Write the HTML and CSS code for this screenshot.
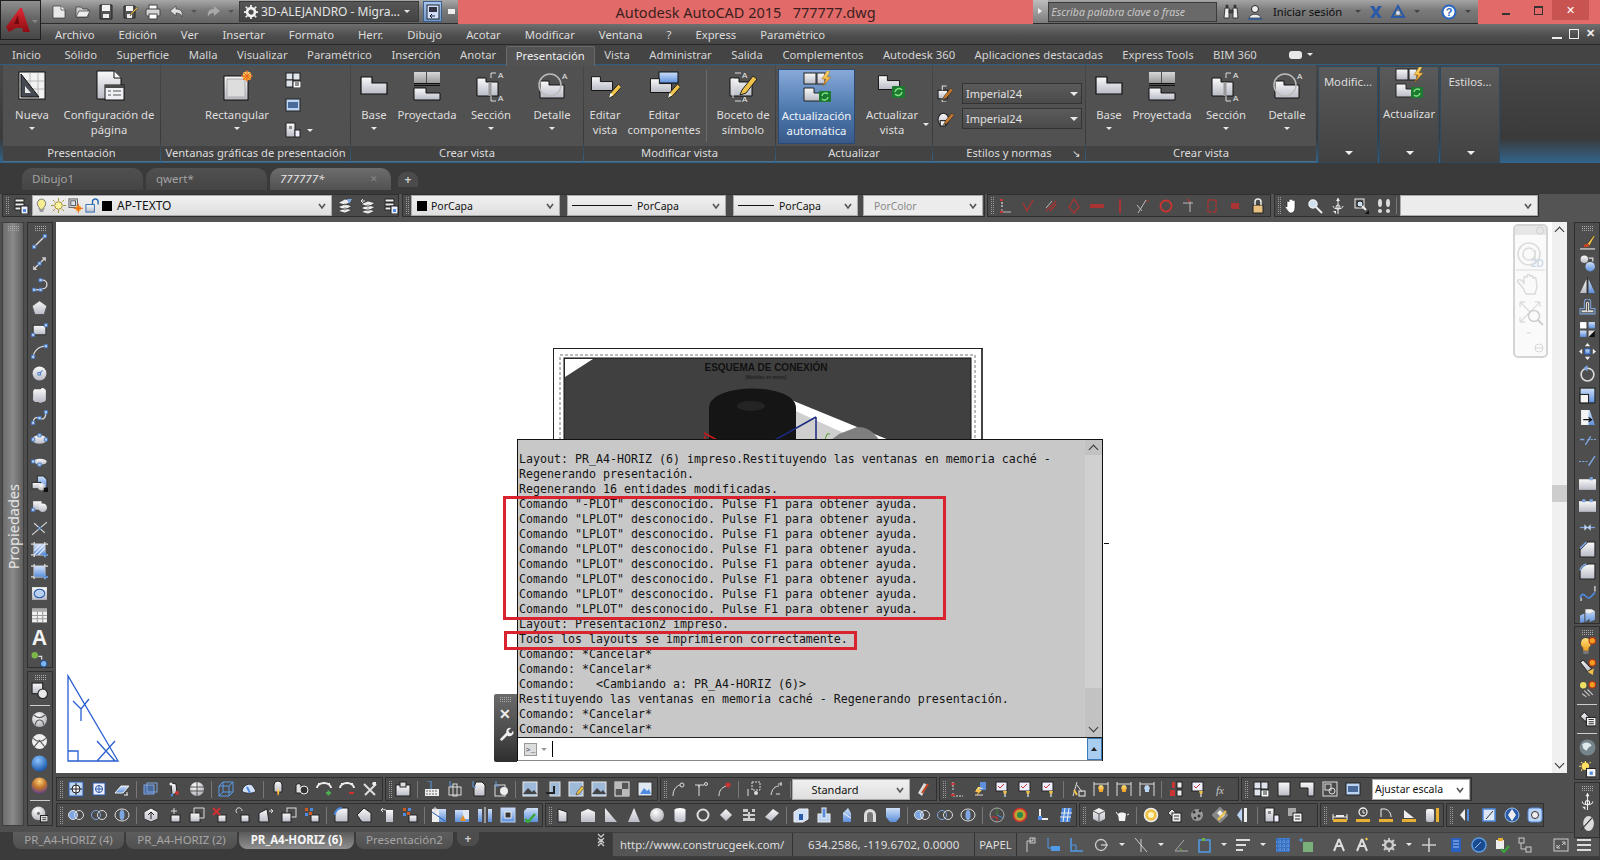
FILE: index.html
```html
<!DOCTYPE html>
<html lang="es">
<head>
<meta charset="utf-8">
<title>Autodesk AutoCAD 2015</title>
<link rel="stylesheet" href="styles.css">
</head>
<body>
<svg class="defs" xmlns="http://www.w3.org/2000/svg">
<defs>
<linearGradient id="w" x1="0" y1="0" x2="0" y2="1"><stop offset="0" stop-color="#fafafa"/><stop offset="1" stop-color="#b9bbc6"/></linearGradient>
<linearGradient id="g" x1="0" y1="0" x2="0" y2="1"><stop offset="0" stop-color="#d8d8d8"/><stop offset="1" stop-color="#9a9a9a"/></linearGradient>
<linearGradient id="b" x1="0" y1="0" x2="0" y2="1"><stop offset="0" stop-color="#cfe0f8"/><stop offset="1" stop-color="#5c8fdc"/></linearGradient>
<linearGradient id="o" x1="0" y1="0" x2="0" y2="1"><stop offset="0" stop-color="#ffe27a"/><stop offset="1" stop-color="#ef9a1c"/></linearGradient>
<linearGradient id="r" x1="0" y1="0" x2="0" y2="1"><stop offset="0" stop-color="#e02a36"/><stop offset="1" stop-color="#8d0d12"/></linearGradient>
<radialGradient id="sb" cx=".4" cy=".3" r=".8"><stop offset="0" stop-color="#8ec4ff"/><stop offset="1" stop-color="#0c4aa0"/></radialGradient>
<radialGradient id="so" cx=".5" cy=".25" r=".8"><stop offset="0" stop-color="#ffd27a"/><stop offset=".5" stop-color="#c0742a"/><stop offset="1" stop-color="#5a3aa0"/></radialGradient>
<radialGradient id="sw" cx=".4" cy=".3" r=".8"><stop offset="0" stop-color="#fff"/><stop offset="1" stop-color="#a8a8b0"/></radialGradient>
</defs>

<!-- ribbon icons -->
<symbol id="Lb" viewBox="0 0 32 32"><path d="M3 7h11v6h15v11H3z" fill="url(#w)" stroke="#111" stroke-width="1.2"/></symbol>
<symbol id="Pn" viewBox="0 0 32 32"><path d="M20 28l1.500-5 8-9 3 3-8 9z" fill="#eec24a" stroke="#222"/><path d="M20 28l1.500-5 2.500 2z" fill="#fff"/></symbol>
<symbol id="Rn" viewBox="0 0 32 32"><rect x="16" y="16" width="13" height="12" rx="1" fill="#1c7a30"/><path d="M19 22a4 4 0 0 1 7-2M26 22a4 4 0 0 1-7 2" fill="none" stroke="#7fe07f" stroke-width="1.600"/></symbol>
<symbol id="Nu" viewBox="0 0 32 32"><rect x="3" y="2" width="26" height="27" fill="#f2f2f2" stroke="#111"/><path d="M14 3v25M22 3v25M4 11h24M4 19h24" stroke="#b8b8b8"/><path d="M5 4v23h18z" fill="#454a52" stroke="#111"/><path d="M9 16v7h6z" fill="#e8e8e8"/></symbol>
<symbol id="Pa" viewBox="0 0 32 32"><path d="M4 1h17l7 7v21H4z" fill="url(#w)" stroke="#111"/><path d="M21 1v7h7" fill="#fff" stroke="#111"/><rect x="12" y="15" width="19" height="15" fill="#eef0f4" stroke="#111"/><rect x="12" y="15" width="19" height="3" fill="#4a4a4a"/><path d="M15 21h3M15 25h3M20 21h8M20 25h8" stroke="#555"/></symbol>
<symbol id="Rc" viewBox="0 0 32 32"><rect x="3" y="6" width="24" height="24" fill="url(#w)" stroke="#111"/><rect x="6" y="9" width="18" height="18" fill="#ddd" stroke="#aaa"/><circle cx="26" cy="6" r="4.500" fill="url(#o)"/><path d="M26 0v12M20 6h12M22 2l8 8M30 2l-8 8" stroke="#e8601c"/></symbol>
<symbol id="Pr" viewBox="0 0 32 32"><rect x="3" y="2" width="12" height="11" fill="url(#g)"/><rect x="16" y="2" width="13" height="11" fill="url(#g)"/><path d="M3 13.500h26M3 15.500h26" stroke="#111"/><path d="M3 18h12v5h14v7H3z" fill="url(#w)" stroke="#111"/></symbol>
<symbol id="Se" viewBox="0 0 32 32"><path d="M2 8h9v4h12v14H2z" fill="url(#w)" stroke="#111"/><path d="M15 12v14" stroke="#999" stroke-width="3"/><path d="M16 8V3h5M16 26v5h5" fill="none" stroke="#ddd"/><text class="ta" x="23" y="8">A</text><text class="ta" x="23" y="31">A</text></symbol>
<symbol id="De" viewBox="0 0 32 32"><path d="M4 11h9v4h15v13H4z" fill="url(#w)" stroke="#111"/><circle cx="14" cy="15" r="11" fill="none" stroke="#bbb" stroke-width="1.500"/><text class="ta" x="26" y="9">A</text></symbol>
<symbol id="Ev" viewBox="0 0 32 32"><use href="#Lb" width="26" height="26" x="0" y="1"/><use href="#Pn"/></symbol>
<symbol id="Ec" viewBox="0 0 32 32"><rect x="11" y="2" width="19" height="11" fill="url(#b)" stroke="#111"/><use href="#Lb" width="26" height="26" x="0" y="3"/><use href="#Pn" y="0"/></symbol>
<symbol id="Bo" viewBox="0 0 32 32"><path d="M3 8h9v4h13v14H3z" fill="url(#w)" stroke="#111"/><path d="M6 8v20M8 3h6M8 31h6" fill="none" stroke="#ddd"/><text class="ta" x="15" y="8">A</text><text class="ta" x="15" y="32">A</text><path d="M13 25l2-5 11-14 4 3-11 14z" fill="#eec24a" stroke="#222"/></symbol>
<symbol id="Au" viewBox="0 0 32 32"><rect x="3" y="2" width="12" height="11" fill="url(#w)" stroke="#222"/><rect x="16" y="2" width="8" height="11" fill="url(#w)" stroke="#222"/><path d="M26 0l-5 8h4l-3 7 8-9h-4l3-6z" fill="url(#o)" stroke="#a46a10" stroke-width=".5"/><path d="M3 17h10v5h11v8H3z" fill="url(#w)" stroke="#222"/><rect x="18" y="20" width="12" height="11" rx="1" fill="#1c7a30"/><path d="M21 25a3.500 3.500 0 0 1 6-2M27 26a3.500 3.500 0 0 1-6 2" fill="none" stroke="#7fe07f" stroke-width="1.500"/></symbol>
<symbol id="Ua" viewBox="0 0 32 32"><use href="#Lb" width="26" height="26" x="0" y="0"/><use href="#Rn"/></symbol>
<symbol id="Sa" viewBox="0 0 16 16"><rect x="1" y="5" width="9" height="8" fill="url(#w)" stroke="#222"/><path d="M5 5V1h4M5 13v3h4" stroke="#ddd" fill="none"/><path d="M5 14l2-4 6-7 2 2-6 7z" fill="#c8782a" stroke="#222" stroke-width=".5"/></symbol>
<symbol id="Sb" viewBox="0 0 16 16"><ellipse cx="6" cy="9" rx="5" ry="6" fill="url(#w)" stroke="#222"/><rect x="3" y="10" width="5" height="5" fill="#eee" stroke="#222"/><path d="M6 14l2-4 6-7 2 2-6 7z" fill="#c8782a" stroke="#222" stroke-width=".5"/></symbol>

<!-- small generic -->
<symbol id="ln" viewBox="0 0 16 16"><path class="k" d="M3 13L13 3"/><path class="n" d="M1.500 11.500h3v3h-3zM11.500 1.500h3v3h-3z"/></symbol>
<symbol id="ry" viewBox="0 0 16 16"><path class="k" d="M3 13L13 3"/><path d="M10 2h4v4zM2 10v4h4z" fill="#ccc"/><path class="n" d="M6.500 6.500h3v3h-3z"/></symbol>
<symbol id="pl" viewBox="0 0 16 16"><path class="k" d="M3 12h6M9 3h2a4 4 0 0 1 0 8h-1"/><path class="n" d="M1.500 10.500h3v3h-3zM7.500 1.500h3v3h-3zM7.500 10.500h3v3h-3z"/></symbol>
<symbol id="pg" viewBox="0 0 16 16"><path d="M8 1.500l7 5-2.500 8h-9L1 6.500z" fill="url(#w)" stroke="#555"/></symbol>
<symbol id="rc" viewBox="0 0 16 16"><rect x="2" y="4" width="12" height="9" fill="url(#w)" stroke="#333"/><path class="n" d="M.5 11.500h3v3h-3zM12.500 2.500h3v3h-3z"/></symbol>
<symbol id="ar" viewBox="0 0 16 16"><path class="k" d="M2 14C2 8 7 3 14 3"/><path class="n" d="M.5 11.500h3v3h-3zM12.500 1.500h3v3h-3z"/></symbol>
<symbol id="ci" viewBox="0 0 16 16"><circle cx="8" cy="8" r="6.500" fill="url(#w)"/><path class="kb" d="M8 8l3-3"/><path class="n" d="M6.500 7h2.500v2.500h-2.500z"/></symbol>
<symbol id="cl" viewBox="0 0 16 16"><path d="M3 2h6a3 3 0 0 1 5 3v6a3 3 0 0 1-3 3 3 3 0 0 1-4 0H4a3 3 0 0 1-2-4V4z" fill="url(#w)"/></symbol>
<symbol id="sp" viewBox="0 0 16 16"><path class="k" d="M2 14c0-8 5-6 7-5s5 0 5-6"/><path class="n" d="M.5 11.500h3v3h-3zM6.500 7h3v3h-3zM12.500 1.500h3v3h-3z"/></symbol>
<symbol id="el" viewBox="0 0 16 16"><ellipse cx="8" cy="8" rx="7" ry="4" fill="url(#w)"/><path class="n" d="M.5 6.500h3v3h-3zM6.500 2.500h3v3h-3zM12.500 6.500h3v3h-3z"/></symbol>
<symbol id="ea" viewBox="0 0 16 16"><path d="M2 8a7 4 0 0 1 13 0 7 4 0 0 1-9 3z" fill="url(#w)"/><path class="n" d="M.5 6.500h3v3h-3zM6.500 9.500h3v3h-3z"/></symbol>
<symbol id="ib" viewBox="0 0 16 16"><path d="M6 1h6l3 3v8H6z" fill="url(#b)" stroke="#333"/><rect x="1" y="7" width="8" height="6" fill="url(#w)" stroke="#333"/><circle cx="10" cy="11" r="3.500" fill="url(#sw)"/><path d="M12 12h4v4h-4z" fill="#111"/></symbol>
<symbol id="mb" viewBox="0 0 16 16"><rect x="2" y="4" width="8" height="8" fill="url(#w)"/><circle cx="11" cy="10" r="4" fill="url(#w)"/><path class="n" d="M.5 10.500h3v3h-3z"/></symbol>
<symbol id="pt" viewBox="0 0 16 16"><path d="M1 15L15 3M3 4l10 9" stroke="#ddd" fill="none"/><path class="n" d="M7 7.500h2v2h-2z"/></symbol>
<symbol id="ha" viewBox="0 0 16 16"><path class="k" d="M3 1v14M13 1v14M0 3h16M0 13h16"/><rect x="3" y="3" width="10" height="10" fill="url(#b)"/><path d="M3 9l6-6M3 13L13 3M7 13l6-6" stroke="#eef" fill="none"/><path d="M11 13h5M13.500 10.500v5" stroke="#5c8fdc" stroke-width="1.300"/></symbol>
<symbol id="gr" viewBox="0 0 16 16"><path class="k" d="M3 1v14M13 1v14M0 3h16M0 13h16"/><rect x="3" y="3" width="10" height="10" fill="url(#b)"/><path d="M11 13h5M13.500 10.500v5" stroke="#5c8fdc" stroke-width="1.300"/></symbol>
<symbol id="rg" viewBox="0 0 16 16"><rect x="1" y="2" width="14" height="12" fill="url(#w)"/><ellipse cx="8" cy="8" rx="5" ry="4" fill="#b9d0f0" stroke="#2a5ba8"/></symbol>
<symbol id="tb" viewBox="0 0 16 16"><rect x="1" y="1.500" width="14" height="13" fill="#f2f2f2"/><rect x="1" y="1.500" width="14" height="3" fill="#aaa"/><path d="M1 8h14M1 11h14M6 4v11M11 4v11" stroke="#999"/></symbol>
<symbol id="tx" viewBox="0 0 16 16"><text class="tA" x="8" y="15">A</text></symbol>
<symbol id="ad" viewBox="0 0 16 16"><circle cx="3.500" cy="4" r="3" fill="#7ab648"/><circle cx="12" cy="12" r="3" fill="#7eb4f0" stroke="#23508f"/><path class="k" d="M7 5h3v3"/></symbol>
<symbol id="oc" viewBox="0 0 16 16"><rect x="1" y="1" width="10" height="10" fill="url(#w)" stroke="#222"/><circle cx="11" cy="11" r="4.500" fill="#e8e8e8" stroke="#222"/></symbol>
<symbol id="s1" viewBox="0 0 16 16"><circle cx="8" cy="8" r="7" fill="url(#sw)"/><path d="M3 4c4 3 6 3 10 0M4 13c1-6 7-6 8 0" fill="none" stroke="#555"/></symbol>
<symbol id="s2" viewBox="0 0 16 16"><circle cx="8" cy="8" r="7" fill="#eee"/><path d="M2 5c4 4 8 4 12 0M3 13l5-6 5 6" fill="none" stroke="#555"/></symbol>
<symbol id="s3" viewBox="0 0 16 16"><circle cx="8" cy="8" r="7.500" fill="url(#sb)"/></symbol>
<symbol id="s4" viewBox="0 0 16 16"><circle cx="8" cy="8" r="7.500" fill="url(#so)"/></symbol>
<symbol id="sl" viewBox="0 0 16 16"><circle cx="7" cy="7" r="6.500" fill="url(#sw)"/><circle cx="7" cy="7" r="1.500" fill="#777"/><rect x="9" y="9" width="7" height="6" fill="#f4f4f4" stroke="#222"/><path d="M10.500 11h4M10.500 13h4" stroke="#333"/></symbol>

<!-- right column -->
<symbol id="mp" viewBox="0 0 16 16"><path d="M8 10L14 2l1 1-5 9z" fill="#eec24a" stroke="#222" stroke-width=".5"/><path d="M4 13c1-3 3-3 4-3l2 2c-1 1-3 2-6 1z" fill="#c8461e"/><path d="M1 15h14" stroke="#eee"/></symbol>
<symbol id="cp" viewBox="0 0 16 16"><circle cx="5" cy="4" r="3.500" fill="url(#w)"/><circle cx="10.500" cy="11" r="4.500" fill="url(#b)"/><path class="k" d="M9 3h4v3"/></symbol>
<symbol id="mi" viewBox="0 0 16 16"><path d="M7 2v13H1z" fill="url(#w)"/><path d="M9 2v13h6z" fill="url(#b)"/><path d="M8 0v16" stroke="#333"/></symbol>
<symbol id="of" viewBox="0 0 16 16"><path d="M1 14V9h4V3a2 2 0 0 1 6 0v6h4v5z" fill="none" stroke="#7ea6e0"/><path d="M3 12V11h4V4a1 1 0 0 1 2 0v7h4v1z" fill="none" stroke="#ddd"/></symbol>
<symbol id="ay" viewBox="0 0 16 16"><rect x="1" y="1" width="6" height="6" fill="#fff"/><rect x="9" y="1" width="6" height="6" fill="url(#b)"/><rect x="1" y="9" width="6" height="6" fill="url(#b)"/><path d="M9 9h6v6H9z" fill="#ddd"/><path d="M15 9v6H9z" fill="#111"/></symbol>
<symbol id="mv" viewBox="0 0 16 16"><path d="M8 0l2.500 3h-5zM8 16l-2.500-3h5zM0 8l3-2.500v5zM16 8l-3 2.500v-5z" fill="#eee"/><rect x="5.500" y="5.500" width="5" height="5" fill="url(#b)" stroke="#2a5ba8"/></symbol>
<symbol id="ro" viewBox="0 0 16 16"><circle cx="8" cy="9" r="6" fill="none" stroke="#ddd" stroke-width="1.500"/><path d="M8 0v6l-4-3z" fill="#7ea6e0"/></symbol>
<symbol id="sc" viewBox="0 0 16 16"><rect x="1" y="1" width="14" height="14" fill="url(#b)" stroke="#222"/><rect x="1" y="7" width="8" height="8" fill="#f4f4f4" stroke="#222"/></symbol>
<symbol id="st" viewBox="0 0 16 16"><path d="M2 1h8l5 14H2z" fill="url(#b)"/><path d="M2 1h7v14H2z" fill="#f4f4f4"/><path d="M4 10h8M9 8l3 2-3 2" fill="none" stroke="#111"/></symbol>
<symbol id="tr" viewBox="0 0 16 16"><path d="M1 8h4M11 5l-5 8" stroke="#7ea6e0" stroke-width="1.300" fill="none"/><path d="M8 8h8" stroke="#7ea6e0" stroke-dasharray="2 1"/></symbol>
<symbol id="xt" viewBox="0 0 16 16"><path d="M0 8h8" stroke="#7ea6e0" stroke-dasharray="2 1"/><path d="M9 12L15 3" stroke="#7ea6e0" stroke-width="1.300"/></symbol>
<symbol id="b1" viewBox="0 0 16 16"><rect x="0" y="4" width="16" height="10" fill="url(#w)"/><rect x="10" y="2" width="3" height="3" fill="#7ea6e0"/></symbol>
<symbol id="b2" viewBox="0 0 16 16"><rect x="0" y="4" width="16" height="10" fill="url(#w)"/><path d="M3 2h3v3H3zM10 2h3v3h-3z" fill="#7ea6e0"/></symbol>
<symbol id="jn" viewBox="0 0 16 16"><path d="M1 8h14" stroke="#7ea6e0" stroke-width="1.200"/><path d="M5 5l3 3-3 3zM11 5L8 8l3 3z" fill="#bcd4f4"/></symbol>
<symbol id="ch" viewBox="0 0 16 16"><path d="M1 15V8l7-7h7v14z" fill="url(#w)" stroke="#222"/><path d="M1 7l6-6" stroke="#7ea6e0" stroke-width="1.500"/></symbol>
<symbol id="fi" viewBox="0 0 16 16"><path d="M1 15V9c0-4 4-8 8-8h6v14z" fill="url(#w)" stroke="#222"/><path d="M1 7c1-3 3-5 6-6" stroke="#7ea6e0" stroke-width="1.500" fill="none"/></symbol>
<symbol id="bd" viewBox="0 0 16 16"><path d="M1 12c3-8 6 2 9 0s4-4 5-5" fill="none" stroke="#4f8be0" stroke-width="1.500"/><path class="k" d="M2 15v-3M15 6V1"/></symbol>
<symbol id="ex" viewBox="0 0 16 16"><path d="M1 8l4-2v8l-4 1zM6 5l4-3v9l-4 3zM10 6l5-2v8l-5 2z" fill="url(#b)"/><path d="M6 2h6l3 2-5 2-4-1z" fill="#eee"/></symbol>
<symbol id="lg" viewBox="0 0 16 16"><path d="M6 1a5 5 0 0 1 3 9v3H4v-3A5 5 0 0 1 6 1z" fill="url(#o)"/><rect x="4" y="13" width="5" height="3" fill="#777"/><circle cx="12.500" cy="3.500" r="3" fill="#f0a020" stroke="#c03010"/></symbol>
<symbol id="lf" viewBox="0 0 16 16"><path d="M1 3l3-2 8 8-4 3z" fill="url(#w)" stroke="#333"/><path d="M8 12l5 3 1-6z" fill="#eec24a"/><circle cx="12.500" cy="3.500" r="3" fill="#f0a020" stroke="#c03010"/></symbol>
<symbol id="ld" viewBox="0 0 16 16"><circle cx="4" cy="4" r="3" fill="#eee060"/><circle cx="12.500" cy="3.500" r="3" fill="#f0a020" stroke="#c03010"/><path d="M5 9l5 5M8 8l5 5M3 12l4 3" stroke="#ccc"/></symbol>
<symbol id="lt" viewBox="0 0 16 16"><path d="M1 6l4-4 5 5-4 4z" fill="url(#w)" stroke="#333"/><rect x="7" y="7" width="9" height="8" fill="#f4f4f4" stroke="#222"/><path d="M9 9h5M9 11h5M9 13h5" stroke="#333"/></symbol>
<symbol id="gl" viewBox="0 0 16 16"><circle cx="8" cy="8" r="7.500" fill="#76858c"/><path d="M3 5c3-3 7-2 9 1l-3 2-2 3-3-2z" fill="#dfe8ea"/></symbol>
<symbol id="su" viewBox="0 0 16 16"><circle cx="6" cy="5" r="3.500" fill="#ffe060"/><path d="M6 0v2M0 5h2M2 1l1 1M11 1l-1 1M2 9l1-1" stroke="#ffe060"/><rect x="7" y="7" width="9" height="8" fill="#f4f4f4" stroke="#222"/><rect x="10" y="10" width="3" height="3" fill="#4f8be0"/></symbol>
<symbol id="or" viewBox="0 0 16 16"><path d="M8 0v16M3 8a5 3 0 1 0 10 0" stroke="#eee" fill="none"/><path d="M8 0l2 3H6zM3 13h3v3z" fill="#eee"/><circle cx="8" cy="9" r="2" fill="none" stroke="#eee"/></symbol>
<symbol id="tk" viewBox="0 0 16 16"><ellipse cx="9" cy="8" rx="5" ry="7" fill="#ddd"/><path d="M2 14L12 3" stroke="#333"/></symbol>

<!-- top toolbar -->
<symbol id="lm" viewBox="0 0 16 16"><path d="M2 1h9v3H2zM2 5h9v3H2zM2 9h6v3H2z" fill="#eee" stroke="#222"/><rect x="8" y="8" width="7" height="8" fill="#eef" stroke="#222"/><rect x="10" y="11" width="3" height="3" fill="#4f8be0"/></symbol>
<symbol id="bu" viewBox="0 0 16 16"><path d="M8 1a5 5 0 0 1 2.500 9v2h-5v-2A5 5 0 0 1 8 1z" fill="#f6ec90" stroke="#777"/><rect x="6" y="12" width="4" height="3" fill="#999"/></symbol>
<symbol id="sn" viewBox="0 0 16 16"><circle cx="8" cy="8" r="4" fill="#fdf4a0" stroke="#a08a30"/><path d="M8 0v3M8 13v3M0 8h3M13 8h3M2 2l2 2M12 12l2 2M14 2l-2 2M2 14l2-2" stroke="#a08a30"/></symbol>
<symbol id="vf" viewBox="0 0 16 16"><rect x="1" y="1" width="9" height="9" fill="#dfe4ec" stroke="#555"/><rect x="3" y="3" width="5" height="5" fill="none" stroke="#555"/><circle cx="11" cy="11" r="3" fill="#f0a020"/><path d="M11 6v10M6 11h10" stroke="#f06010"/></symbol>
<symbol id="lk" viewBox="0 0 16 16"><rect x="1" y="7" width="9" height="8" fill="url(#w)" stroke="#2a6ab0"/><path d="M8 7V4a3 3 0 0 1 6 0v3" fill="none" stroke="#2a6ab0" stroke-width="1.500"/></symbol>
<symbol id="l2" viewBox="0 0 16 16"><path d="M1 5l7-4 7 2-7 4zM1 9l7-3 7 2-7 4zM1 13l7-3 7 2-7 3z" fill="#eee" stroke="#222" stroke-width=".6"/><path d="M10 1l5 0-3 5z" fill="#7ea6e0"/></symbol>
<symbol id="l3" viewBox="0 0 16 16"><path d="M1 6l7-3 7 2-7 4zM1 10l7-3 7 2-7 4zM1 14l7-3 7 2-7 3z" fill="#eee" stroke="#222" stroke-width=".6"/><path d="M1 3h4M1 3l2-2M1 3l2 2" stroke="#ddd" fill="none"/></symbol>
<symbol id="cv" viewBox="0 0 10 10"><path d="M2 3l3 4 3-4" fill="none" stroke="#555" stroke-width="1.600"/></symbol>
<symbol id="o1" viewBox="0 0 16 16"><path d="M5 1v8" stroke="#fff" stroke-dasharray="2 1"/><path d="M5 11v3h9" stroke="#bbb" fill="none"/><path d="M3 2h3M3 14h3" stroke="#c33" stroke-width="2"/></symbol>
<symbol id="o2" viewBox="0 0 16 16"><path d="M3 5l4 8 6-11" stroke="#a33" stroke-width="1.300" fill="none"/></symbol>
<symbol id="o3" viewBox="0 0 16 16"><path d="M3 13L13 3M7 13l6-7" stroke="#a33" stroke-width="1.300" fill="none"/><path d="M3 10l6-7" stroke="#bbb"/></symbol>
<symbol id="o4" viewBox="0 0 16 16"><path d="M8 1l-5 8 5 6 5-6z" fill="none" stroke="#a33" stroke-width="1.300"/></symbol>
<symbol id="o5" viewBox="0 0 16 16"><rect x="1" y="6" width="14" height="4" fill="#a33"/></symbol>
<symbol id="o6" viewBox="0 0 16 16"><rect x="7" y="1" width="2" height="14" fill="#a33"/></symbol>
<symbol id="o7" viewBox="0 0 16 16"><path d="M2 7l5 6M3 15l8-13" stroke="#bbb" fill="none"/><path d="M11 4l3-2" stroke="#a33"/></symbol>
<symbol id="o8" viewBox="0 0 16 16"><circle cx="8" cy="8" r="5.500" fill="none" stroke="#c33" stroke-width="1.800"/></symbol>
<symbol id="o9" viewBox="0 0 16 16"><path d="M2 5h10M9 3v11" stroke="#bbb"/><path d="M6 1l3 3" stroke="#a33" stroke-width="1.300"/></symbol>
<symbol id="oa" viewBox="0 0 16 16"><rect x="4" y="2" width="8" height="12" fill="none" stroke="#a33" stroke-width="1.500" stroke-dasharray="3 1"/></symbol>
<symbol id="ob" viewBox="0 0 16 16"><rect x="4" y="5" width="8" height="6" fill="#a33"/></symbol>
<symbol id="pk" viewBox="0 0 16 16"><rect x="3" y="7" width="10" height="8" fill="#e8c080" stroke="#222"/><path d="M5 7V4a3 3 0 0 1 6 0v3" fill="none" stroke="#eee" stroke-width="1.500"/></symbol>
<symbol id="hd" viewBox="0 0 16 16"><path d="M3 8V4a1 1 0 0 1 2 0V2a1 1 0 0 1 2 0v0a1 1 0 0 1 2 0v1a1 1 0 0 1 2 0v7c0 3-2 5-4 5s-3-2-6-6c0-1 1-1 2 0z" fill="#fff" stroke="#222" stroke-width=".6"/></symbol>
<symbol id="mg" viewBox="0 0 16 16"><circle cx="6" cy="6" r="4" fill="#cfe0f0" stroke="#eee" stroke-width="1.500"/><path d="M9 9l6 6" stroke="#eee" stroke-width="2"/></symbol>
<symbol id="zw" viewBox="0 0 16 16"><rect x="2" y="1" width="9" height="9" fill="none" stroke="#eee"/><circle cx="7" cy="6" r="3" fill="#cfe0f0" stroke="#222"/><path d="M9 8l4 4" stroke="#eee" stroke-width="2"/><path d="M12 16h4v-4z" fill="#111"/></symbol>
<symbol id="fp" viewBox="0 0 16 16"><ellipse cx="4" cy="5" rx="2" ry="4" fill="#ddd"/><ellipse cx="12" cy="5" rx="2" ry="4" fill="#ddd"/><circle cx="4" cy="13" r="2" fill="#ddd"/><circle cx="12" cy="13" r="2" fill="#ddd"/></symbol>

<!-- bottom rows -->
<symbol id="v1" viewBox="0 0 16 16"><rect x="1" y="1" width="14" height="14" fill="#bcd4f4" stroke="#2a5ba8"/><circle cx="8" cy="8" r="4" fill="#fff" stroke="#222"/><path d="M8 2v12M2 8h12" stroke="#222"/></symbol>
<symbol id="v2" viewBox="0 0 16 16"><rect x="2" y="2" width="12" height="12" fill="#eef" stroke="#2a5ba8"/><circle cx="8" cy="8" r="3.500" fill="none" stroke="#2a5ba8"/><path d="M8 4v8M4 8h8" stroke="#2a5ba8"/></symbol>
<symbol id="er" viewBox="0 0 16 16"><path d="M1 12l6-7h8l-6 7z" fill="url(#b)" stroke="#eee"/><path d="M10 14l4 0M13 11v3" stroke="#eee"/></symbol>
<symbol id="bx" viewBox="0 0 16 16"><rect x="1" y="4" width="10" height="9" fill="#4a6a9a" stroke="#7ea6e0"/><rect x="4" y="2" width="10" height="9" fill="none" stroke="#7ea6e0"/></symbol>
<symbol id="pn" viewBox="0 0 16 16"><path d="M5 2l5 1 1 9-5 2z" fill="url(#w)" stroke="#222"/><circle cx="5" cy="3" r="1.500" fill="#eee"/><circle cx="11" cy="12" r="2" fill="#c33"/><circle cx="6" cy="14" r="1.300" fill="#4f8be0"/></symbol>
<symbol id="sg" viewBox="0 0 16 16"><circle cx="8" cy="8" r="7" fill="url(#sw)"/><path d="M1 6h14M1 10h14M8 1v14" stroke="#555"/></symbol>
<symbol id="wb" viewBox="0 0 16 16"><path d="M1 5h10v10H1zM5 1h10v10H5zM1 5l4-4M11 5l4-4M1 15l4-4M11 15l4-4" fill="none" stroke="#5c9ae8"/></symbol>
<symbol id="ht" viewBox="0 0 16 16"><path d="M1 10c1-6 8-9 11-5l3 5c-2 3-12 3-14 0z" fill="#cfe0f8" stroke="#333"/><path d="M6 6l3 6" stroke="#4f8be0" stroke-width="2"/></symbol>
<symbol id="lb" viewBox="0 0 16 16"><path d="M4 4a4 4 0 0 1 8 0v7H4z" fill="url(#w)" stroke="#222"/><path d="M8 7c-2 3 0 8 0 8s3-4 0-8z" fill="url(#o)"/></symbol>
<symbol id="cm" viewBox="0 0 16 16"><path d="M3 4a3 3 0 0 1 5 0v8H3z" fill="#ddd" stroke="#222"/><circle cx="11" cy="9" r="4" fill="#333" stroke="#eee"/></symbol>
<symbol id="ap" viewBox="0 0 16 16"><path d="M1 7a7 5 0 0 1 14 0" fill="none" stroke="#eee" stroke-width="2"/><path d="M3 2v1M8 1v1M13 2v1" stroke="#eee" stroke-width="2"/><path d="M10 12h5M12.500 9.500v5" stroke="#4cb050" stroke-width="2"/></symbol>
<symbol id="am" viewBox="0 0 16 16"><path d="M1 7a7 5 0 0 1 14 0" fill="none" stroke="#eee" stroke-width="2"/><path d="M3 2v1M8 1v1M13 2v1" stroke="#eee" stroke-width="2"/><path d="M10 12h5" stroke="#d03030" stroke-width="2"/></symbol>
<symbol id="wr" viewBox="0 0 16 16"><path d="M2 3l11 11M14 3L3 14" stroke="#ddd" stroke-width="2"/><path d="M11 1h3v3l-2 1-2-2z" fill="#eee"/></symbol>
<symbol id="cb" viewBox="0 0 16 16"><rect x="1" y="4" width="14" height="11" fill="url(#w)" stroke="#222"/><rect x="5" y="1" width="6" height="5" fill="#ddd" stroke="#222"/></symbol>
<symbol id="dw" viewBox="0 0 16 16"><rect x="1" y="8" width="14" height="7" fill="#eee"/><path d="M3 0l4 0v8" stroke="#5c9ae8" fill="none"/><path d="M2 10h12M2 13h12" stroke="#666" stroke-dasharray="2 1"/></symbol>
<symbol id="at" viewBox="0 0 16 16"><path d="M3 0v5h3" stroke="#5c9ae8" fill="none"/><rect x="2" y="6" width="12" height="8" fill="none" stroke="#ddd"/><rect x="6" y="3" width="4" height="12" fill="none" stroke="#ddd"/></symbol>
<symbol id="ad2" viewBox="0 0 16 16"><path d="M6 1h6l3 3v11H4V6z" fill="url(#w)" stroke="#222"/><path d="M3 0v6h3" stroke="#5c9ae8" fill="none"/></symbol>
<symbol id="ac" viewBox="0 0 16 16"><rect x="2" y="4" width="10" height="11" fill="none" stroke="#ddd"/><circle cx="11" cy="10" r="4" fill="#eee"/><path d="M3 0v5h3" stroke="#5c9ae8" fill="none"/></symbol>
<symbol id="pc" viewBox="0 0 16 16"><rect x="1" y="1" width="14" height="14" fill="#9fb9d8" stroke="#eee"/><path d="M1 13l5-6 4 4 2-2 3 4z" fill="#444"/></symbol>
<symbol id="p2" viewBox="0 0 16 16"><rect x="5" y="1" width="10" height="14" fill="#9fb9d8" stroke="#ddd"/><path d="M1 12h8V5" stroke="#222" fill="none" stroke-width="2"/></symbol>
<symbol id="p3" viewBox="0 0 16 16"><rect x="1" y="1" width="14" height="14" fill="#9fb9d8" stroke="#eee"/><path d="M8 14l1-3 5-6 2 2-5 6z" fill="#eec24a" stroke="#222" stroke-width=".5"/></symbol>
<symbol id="p4" viewBox="0 0 16 16"><rect x="1" y="1" width="14" height="14" fill="#555" stroke="#eee"/><path d="M1 1h7v7H1zM8 8h7v7H8z" fill="#bbb"/></symbol>
<symbol id="p5" viewBox="0 0 16 16"><rect x="1" y="1" width="14" height="14" fill="#dfe8f0" stroke="#333"/><path d="M3 13l4-6 3 3 2-2 2 5z" fill="#4f8be0"/></symbol>
<symbol id="a1" viewBox="0 0 16 16"><path d="M3 15c0-6 3-10 7-11" fill="none" stroke="#ddd"/><circle cx="12" cy="4" r="2" fill="none" stroke="#ddd"/></symbol>
<symbol id="a2" viewBox="0 0 16 16"><path d="M6 15V5M2 4h9" stroke="#ddd" fill="none"/><circle cx="13" cy="3" r="1.500" fill="none" stroke="#ddd"/><circle cx="6" cy="5" r="1" fill="#ddd"/></symbol>
<symbol id="a3" viewBox="0 0 16 16"><path d="M3 15c0-5 2-8 7-10" fill="none" stroke="#ddd"/><circle cx="12" cy="4" r="2.500" fill="#c33"/></symbol>
<symbol id="a4" viewBox="0 0 16 16"><path d="M3 15V8" stroke="#ddd"/><rect x="7" y="1" width="8" height="8" fill="none" stroke="#ddd" stroke-dasharray="2 1"/><circle cx="11" cy="12" r="2" fill="#ddd"/></symbol>
<symbol id="a5" viewBox="0 0 16 16"><path d="M3 14c1-6 4-9 8-9" fill="none" stroke="#ddd"/><path d="M10 3h4M13 1v4" stroke="#ddd"/><path d="M8 13h4" stroke="#ddd"/></symbol>
<symbol id="br" viewBox="0 0 16 16"><path d="M4 12l6-10 3 2-5 11z" fill="#ddd"/><path d="M8 12l6-9" stroke="#c8461e" stroke-width="2"/></symbol>
<symbol id="c1" viewBox="0 0 16 16"><path d="M4 1v9M4 12v3h10" stroke="#ddd" fill="none" stroke-dasharray="2 1"/><path d="M2 3h4M2 14h4" stroke="#c33" stroke-width="2"/></symbol>
<symbol id="c2" viewBox="0 0 16 16"><rect x="8" y="1" width="6" height="8" fill="#5c8fdc"/><path d="M3 14h8M4 9l7-2" stroke="#ddd"/><path d="M6 6l-3 5h3l-2 4 6-6H7l2-3z" fill="url(#o)"/></symbol>
<symbol id="c3" viewBox="0 0 16 16"><rect x="1" y="1" width="11" height="9" fill="#eef" stroke="#222"/><path d="M3 5l2 2 4-4" stroke="#c33" fill="none"/><path d="M8 10h4l-1 3H9z" fill="#eec24a"/><rect x="9" y="13" width="2" height="3" fill="#aaa"/></symbol>
<symbol id="c4" viewBox="0 0 16 16"><path d="M3 15L7 1M7 4l5 7" stroke="#ddd" fill="none"/><rect x="9" y="10" width="6" height="5" fill="none" stroke="#eee"/><path d="M4 9l3 5" stroke="#eec24a" stroke-width="2"/></symbol>
<symbol id="c5" viewBox="0 0 16 16"><path d="M1 1v14M15 1v14M1 3h14" stroke="#ddd"/><path d="M8 4a3 3 0 0 1 2 5v2H6V9a3 3 0 0 1 2-5z" fill="url(#o)"/></symbol>
<symbol id="c6" viewBox="0 0 16 16"><path d="M1 1v14M15 1v14M1 3h14" stroke="#ddd"/><path d="M8 4a3 3 0 0 1 2 5v2H6V9a3 3 0 0 1 2-5z" fill="#bcd4f4"/></symbol>
<symbol id="c7" viewBox="0 0 16 16"><rect x="9" y="1" width="5" height="6" fill="#eee" stroke="#222"/><rect x="2" y="9" width="5" height="6" fill="#c33"/><rect x="9" y="9" width="5" height="6" fill="#eee" stroke="#222"/><path d="M7 1h-3v6h3" fill="#c33"/></symbol>
<symbol id="fx" viewBox="0 0 16 16"><text class="tf" x="2" y="13">fx</text></symbol>
<symbol id="d1" viewBox="0 0 16 16"><rect x="1" y="1" width="7" height="7" fill="#dfe4ec" stroke="#222"/><rect x="8" y="1" width="7" height="7" fill="#dfe4ec" stroke="#222"/><rect x="1" y="8" width="7" height="7" fill="#dfe4ec" stroke="#222"/><rect x="8" y="9" width="8" height="7" fill="#fff" stroke="#222"/><path d="M10 11h4M10 13h4" stroke="#222"/></symbol>
<symbol id="d2" viewBox="0 0 16 16"><rect x="2" y="1" width="12" height="14" fill="url(#w)" stroke="#222"/></symbol>
<symbol id="d3" viewBox="0 0 16 16"><path d="M1 1h14v14H9V7H1z" fill="url(#w)" stroke="#222"/></symbol>
<symbol id="d4" viewBox="0 0 16 16"><rect x="1" y="1" width="14" height="14" fill="none" stroke="#ddd"/><rect x="3" y="3" width="6" height="6" fill="none" stroke="#ddd"/><circle cx="10" cy="10" r="3" fill="none" stroke="#ddd"/></symbol>
<symbol id="d5" viewBox="0 0 16 16"><rect x="1" y="2" width="14" height="12" fill="#bcd4f4" stroke="#222"/><rect x="3" y="5" width="10" height="6" fill="#4a6a9a"/></symbol>
<symbol id="u1" viewBox="0 0 16 16"><circle cx="5" cy="8" r="4.500" fill="#7ea6e0" stroke="#ddd"/><circle cx="11" cy="8" r="4.500" fill="none" stroke="#ddd"/></symbol>
<symbol id="u2" viewBox="0 0 16 16"><circle cx="5" cy="8" r="4.500" fill="none" stroke="#7ea6e0"/><circle cx="11" cy="8" r="4.500" fill="none" stroke="#ddd"/></symbol>
<symbol id="u3" viewBox="0 0 16 16"><ellipse cx="8" cy="8" rx="7" ry="6" fill="none" stroke="#ddd"/><ellipse cx="8" cy="8" rx="2.500" ry="5" fill="#7ea6e0"/></symbol>
<symbol id="q1" viewBox="0 0 16 16"><path d="M1 5l7-4 7 4v7l-7 3-7-3z" fill="url(#w)" stroke="#333"/><path d="M8 12V6M5 8l3-3 3 3" fill="none" stroke="#222"/></symbol>
<symbol id="q2" viewBox="0 0 16 16"><rect x="5" y="8" width="9" height="7" fill="url(#w)" stroke="#222"/><path d="M5 4h6M8 1v6" stroke="#ddd"/></symbol>
<symbol id="q3" viewBox="0 0 16 16"><path d="M1 6h10v9H1z" fill="url(#w)" stroke="#222"/><path d="M5 1h10v10H5z" fill="none" stroke="#ddd"/></symbol>
<symbol id="q4" viewBox="0 0 16 16"><rect x="6" y="8" width="8" height="7" fill="url(#w)" stroke="#222"/><path d="M1 1l7 7M8 1L1 8" stroke="#d03030" stroke-width="2"/></symbol>
<symbol id="q5" viewBox="0 0 16 16"><rect x="6" y="8" width="8" height="7" fill="url(#w)" stroke="#222"/><path d="M2 6a3 3 0 1 1 5-2" fill="none" stroke="#ddd"/></symbol>
<symbol id="q6" viewBox="0 0 16 16"><path d="M1 15V6l8-4 2 13z" fill="url(#w)" stroke="#222"/><path d="M11 4h4M13 2l2 2-2 2" stroke="#ddd" fill="none"/></symbol>
<symbol id="q7" viewBox="0 0 16 16"><rect x="6" y="1" width="9" height="9" fill="none" stroke="#ddd"/><rect x="1" y="6" width="9" height="9" fill="url(#w)" stroke="#222"/></symbol>
<symbol id="q8" viewBox="0 0 16 16"><rect x="7" y="8" width="8" height="7" fill="url(#w)" stroke="#222"/><path d="M1 1h3v3H1zM5 5h3v3H5z" fill="#d05a20"/><path d="M6 1h3v3H6zM1 6h3v3H1z" fill="#4f8be0"/></symbol>
<symbol id="q9" viewBox="0 0 16 16"><path d="M2 8a7 7 0 0 1 7-7h6v14H2z" fill="url(#w)" stroke="#222"/><path d="M2 8a7 7 0 0 1 7-7" fill="none" stroke="#4f8be0" stroke-width="2"/></symbol>
<symbol id="qa" viewBox="0 0 16 16"><path d="M1 8l7-7 7 5v9H6z" fill="url(#w)" stroke="#222"/></symbol>
<symbol id="qb" viewBox="0 0 16 16"><rect x="7" y="3" width="7" height="12" fill="url(#w)"/><path d="M2 3a4 2 0 0 1 5 0M2 3l2-2M2 3l2 2" stroke="#ddd" fill="none"/></symbol>
<symbol id="qc" viewBox="0 0 16 16"><rect x="1" y="2" width="14" height="13" fill="url(#b)"/><path d="M1 2h7v13H1z" fill="#eee"/><path d="M4 0v6M2 2h4" stroke="#ddd"/><path d="M1 5l13 9" stroke="#2a5ba8"/></symbol>
<symbol id="qd" viewBox="0 0 16 16"><path d="M1 3h14v12H1z" fill="url(#b)"/><path d="M9 3h6v9H9z" fill="#dfe8f4"/><path d="M6 14l3-6 3 6z" fill="#e09020"/></symbol>
<symbol id="qe" viewBox="0 0 16 16"><rect x="1" y="2" width="4" height="13" fill="url(#b)"/><rect x="11" y="2" width="4" height="13" fill="url(#b)"/><path d="M8 0v16" stroke="#eee"/></symbol>
<symbol id="qf" viewBox="0 0 16 16"><rect x="1" y="1" width="14" height="14" fill="url(#b)" stroke="#bcd4f4"/><rect x="5" y="5" width="6" height="6" fill="#333" stroke="#eee"/></symbol>
<symbol id="qg" viewBox="0 0 16 16"><path d="M4 1h11v14H1V4z" fill="url(#b)"/><path d="M2 12l3 3 7-8" stroke="#3aa83a" stroke-width="2.500" fill="none"/></symbol>
<symbol id="h1" viewBox="0 0 16 16"><path d="M1 15V2l9 3v10z" fill="url(#w)" stroke="#222"/></symbol>
<symbol id="h2" viewBox="0 0 16 16"><path d="M1 5l7-3 7 3v10H1z" fill="url(#w)"/></symbol>
<symbol id="h3" viewBox="0 0 16 16"><path d="M2 15V1l12 14z" fill="url(#w)"/></symbol>
<symbol id="h4" viewBox="0 0 16 16"><path d="M8 1l6 14H2z" fill="url(#w)"/></symbol>
<symbol id="h5" viewBox="0 0 16 16"><circle cx="8" cy="8" r="7" fill="url(#sw)"/></symbol>
<symbol id="h6" viewBox="0 0 16 16"><ellipse cx="8" cy="3" rx="5.500" ry="2" fill="#fff"/><path d="M2.500 3v10c0 3 11 3 11 0V3" fill="url(#w)"/></symbol>
<symbol id="h7" viewBox="0 0 16 16"><circle cx="8" cy="8" r="5.500" fill="none" stroke="#ddd" stroke-width="2"/></symbol>
<symbol id="h8" viewBox="0 0 16 16"><path d="M8 2l6 6-6 6-6-6z" fill="url(#w)"/></symbol>
<symbol id="h9" viewBox="0 0 16 16"><path d="M2 2h5v3h4V2h3v3H9v2h5v2H9v2h5v3H2v-3h5V9H2V7h5V5H2z" fill="#ccc"/></symbol>
<symbol id="ha2" viewBox="0 0 16 16"><path d="M1 10L9 2l6 4-8 8z" fill="url(#w)"/></symbol>
<symbol id="j1" viewBox="0 0 16 16"><path d="M1 5l5-3h9v10l-5 3H1z" fill="#cfe0f8" stroke="#eee"/><path d="M6 7h4v6H6z" fill="#2a5ba8"/></symbol>
<symbol id="j2" viewBox="0 0 16 16"><rect x="2" y="7" width="12" height="8" fill="#bcd4f4" stroke="#eee"/><rect x="6" y="1" width="4" height="10" fill="#5c8fdc" stroke="#eee"/></symbol>
<symbol id="j3" viewBox="0 0 16 16"><path d="M4 15V6l5-5 3 5v9z" fill="url(#b)"/><path d="M4 6l8 5" stroke="#eee"/></symbol>
<symbol id="j4" viewBox="0 0 16 16"><path d="M2 15V8a6 6 0 0 1 12 0v7z" fill="#ddd"/><path d="M5 15V8a3 3 0 0 1 6 0v7z" fill="#777"/></symbol>
<symbol id="j5" viewBox="0 0 16 16"><path d="M1 1h14v9l-4 5H5l-4-5z" fill="url(#b)"/></symbol>
<symbol id="m1" viewBox="0 0 16 16"><circle cx="8" cy="8" r="7" fill="none" stroke="#aaa"/><path d="M2 10h6v4" stroke="#c33" fill="none"/><path d="M8 8L8 2" stroke="#3a8a3a"/><path d="M8 8l6 3" stroke="#4f8be0"/></symbol>
<symbol id="m2" viewBox="0 0 16 16"><circle cx="8" cy="8" r="6.500" fill="#c0a030" stroke="#d03030" stroke-width="1.500"/><circle cx="8" cy="8" r="3" fill="#2a8a4a"/></symbol>
<symbol id="m3" viewBox="0 0 16 16"><path d="M5 2v10h8" stroke="#eee" fill="none" stroke-width="2"/><rect x="3" y="9" width="4" height="4" fill="#4f8be0"/></symbol>
<symbol id="m4" viewBox="0 0 16 16"><path d="M4 1h10l-2 14H2z" fill="#4f8be0"/><path d="M3 6h11M2 10h11M7 1l-2 14M11 1L9 15" stroke="#eee"/></symbol>
<symbol id="m5" viewBox="0 0 16 16"><path d="M8 1l6 3v8l-6 3-6-3V4z" fill="url(#w)"/><path d="M2 4l6 3 6-3M8 7v8" stroke="#555" fill="none"/></symbol>
<symbol id="m6" viewBox="0 0 16 16"><path d="M4 7h8l-1 7H5zM4 7c1-2 7-2 8 0" fill="#f4f4f4"/><path d="M2 5l3 4M13 8l2-1" stroke="#f4f4f4"/></symbol>
<symbol id="m7" viewBox="0 0 16 16"><circle cx="8" cy="8" r="6.500" fill="#f0c040" stroke="#eee" stroke-width="1.500"/><circle cx="8" cy="8" r="3" fill="#fff4c0"/></symbol>
<symbol id="m8" viewBox="0 0 16 16"><path d="M2 6l4-4 5 5-4 4z" fill="url(#w)" stroke="#333"/><rect x="6" y="6" width="9" height="9" fill="#eee" stroke="#222"/><path d="M8 9h5M8 12h5" stroke="#333"/></symbol>
<symbol id="m9" viewBox="0 0 16 16"><circle cx="8" cy="8" r="6" fill="#999"/><circle cx="5" cy="5" r="1.500" fill="#333"/><circle cx="10" cy="9" r="1.500" fill="#333"/><circle cx="6" cy="11" r="1.300" fill="#333"/><circle cx="11" cy="4" r="1.300" fill="#333"/></symbol>
<symbol id="ma" viewBox="0 0 16 16"><rect x="2" y="2" width="12" height="12" fill="#888" transform="rotate(45 8 8)"/><path d="M8 3l5 5-3 3-5-5z" fill="#eee"/><path d="M6 13l8-9" stroke="#eec24a" stroke-width="2"/></symbol>
<symbol id="mb2" viewBox="0 0 16 16"><path d="M7 1v14L2 8z" fill="#bcd4f4"/><rect x="9" y="1" width="3" height="14" fill="#eee"/></symbol>
<symbol id="n1" viewBox="0 0 16 16"><path d="M1 1h9v14H1z" fill="url(#w)" stroke="#222"/><rect x="4" y="4" width="3" height="3" fill="#888"/><rect x="10" y="8" width="5" height="7" fill="#eef" stroke="#222"/></symbol>
<symbol id="n2" viewBox="0 0 16 16"><rect x="1" y="1" width="8" height="8" fill="#aaa"/><rect x="6" y="6" width="9" height="9" fill="#f4f4f4" stroke="#222"/><path d="M8 9h5M8 12h5" stroke="#222"/></symbol>
<symbol id="k1" viewBox="0 0 16 16"><path d="M1 10h14M1 7v6M15 7v6" stroke="#eee"/><rect x="1" y="12" width="14" height="3" fill="#e8b030"/><rect x="4" y="8" width="8" height="2" fill="#eee"/></symbol>
<symbol id="k2" viewBox="0 0 16 16"><circle cx="8" cy="5" r="4" fill="none" stroke="#eee" stroke-width="1.300"/><path d="M8 3v3h2" stroke="#eee" fill="none"/><rect x="1" y="12" width="14" height="3" fill="#e8b030"/></symbol>
<symbol id="k3" viewBox="0 0 16 16"><path d="M3 10V2h4c4 1 6 4 6 8" fill="none" stroke="#eee"/><rect x="1" y="12" width="14" height="3" fill="#e8b030"/></symbol>
<symbol id="k4" viewBox="0 0 16 16"><path d="M3 11V3l10 8z" fill="#eee"/><rect x="1" y="12" width="14" height="3" fill="#e8b030"/></symbol>
<symbol id="k5" viewBox="0 0 16 16"><rect x="2" y="2" width="8" height="13" rx="2" fill="url(#w)"/><rect x="12" y="1" width="3" height="14" fill="#e8b030"/></symbol>
<symbol id="e1" viewBox="0 0 16 16"><path d="M7 2v12L2 8z" fill="#eee"/><path d="M10 2v12" stroke="#4f8be0" stroke-width="2"/></symbol>
<symbol id="e2" viewBox="0 0 16 16"><rect x="2" y="2" width="12" height="12" fill="#dde6f4" stroke="#4f8be0" stroke-width="1.500"/><path d="M5 12L12 4" stroke="#333"/></symbol>
<symbol id="e3" viewBox="0 0 16 16"><circle cx="8" cy="8" r="7" fill="#2a5ba8" stroke="#9ac0f0"/><path d="M8 2l4 6-4 6-4-6z" fill="#eee"/></symbol>
<symbol id="e4" viewBox="0 0 16 16"><rect x="1" y="1" width="14" height="14" rx="3" fill="#bcd4f4" stroke="#4f8be0"/><circle cx="8" cy="8" r="3.500" fill="#eee" stroke="#333"/></symbol>

<!-- title bar -->
<symbol id="fn" viewBox="0 0 16 16"><path d="M2 2h8l4 4v8H2z" fill="#e8e8e8" stroke="#333" stroke-width=".7"/><path d="M10 2v4h4" fill="#fff" stroke="#333" stroke-width=".7"/></symbol>
<symbol id="fo" viewBox="0 0 16 16"><path d="M1 13V3h5l2 2h5v8z" fill="#ccc" stroke="#333" stroke-width=".7"/><path d="M1 13l3-6h11l-3 6z" fill="#eee" stroke="#333" stroke-width=".7"/></symbol>
<symbol id="fs" viewBox="0 0 16 16"><path d="M2 1h12v14H2z" fill="#555" stroke="#222"/><rect x="4" y="1" width="8" height="6" fill="#f2f2f2"/><rect x="5" y="10" width="6" height="4" fill="#eee"/></symbol>
<symbol id="fa" viewBox="0 0 16 16"><path d="M2 2h11v12H2z" fill="#555" stroke="#222"/><rect x="4" y="2" width="7" height="5" fill="#f2f2f2"/><rect x="5" y="10" width="5" height="4" fill="#eee"/><path d="M8 12l1-3 6-6 1 1-6 6z" fill="#eec24a" stroke="#222" stroke-width=".4"/></symbol>
<symbol id="fp2" viewBox="0 0 16 16"><rect x="4" y="1" width="8" height="5" fill="#fff" stroke="#444"/><rect x="1" y="5" width="14" height="7" rx="1" fill="#d4d4d4" stroke="#444"/><rect x="4" y="10" width="8" height="5" fill="#fff" stroke="#444"/></symbol>
<symbol id="fu" viewBox="0 0 16 16"><path d="M7 2L1 7l6 5V9c3 0 5 1 6 4 1-5-1-8-6-8z" fill="#ddd" stroke="#444" stroke-width=".7"/></symbol>
<symbol id="fd" viewBox="0 0 16 16"><path d="M9 2l6 5-6 5V9C6 9 4 10 3 13 2 8 4 5 9 5z" fill="#a8a8a8"/></symbol>
<symbol id="ge" viewBox="0 0 16 16"><circle cx="8" cy="8" r="4.500" fill="none" stroke="#f2f2f2" stroke-width="3"/><path d="M8 0v3M8 13v3M0 8h3M13 8h3M2 2l2 2M12 12l2 2M14 2l-2 2M2 14l2-2" stroke="#f2f2f2" stroke-width="2"/></symbol>
<symbol id="fb" viewBox="0 0 16 16"><rect x="2" y="1" width="12" height="14" fill="#cfe0f8" stroke="#223"/><rect x="4" y="3" width="8" height="5" fill="#334"/><path d="M10 12H5M7 10l-2 2 2 2" stroke="#223" fill="none"/></symbol>
<symbol id="bi" viewBox="0 0 16 16"><path d="M2 4h4v10H1zM10 4h4l1 10h-5z" fill="#f0f0f0" stroke="#222" stroke-width=".8"/><path d="M3 1h2v3H3zM11 1h2v3h-2zM6 6h4v3H6z" fill="#444" stroke="#222" stroke-width=".5"/></symbol>
<symbol id="us" viewBox="0 0 16 16"><circle cx="8" cy="5" r="3.500" fill="#f0f0f0" stroke="#222"/><path d="M2 14c1-5 11-5 12 0z" fill="#eee" stroke="#222" stroke-width=".7"/><path d="M1 15h14" stroke="#2a5a9a" stroke-width="1.500"/></symbol>
<symbol id="xx" viewBox="0 0 16 16"><path d="M2 2l4 0 2 4 2-4 4 0-4 6 4 6h-4L8 10l-2 4H2l4-6z" fill="#2a5aa8"/></symbol>
<symbol id="tg" viewBox="0 0 16 16"><path d="M8 2l6 11H2z" fill="none" stroke="#2a5aa8" stroke-width="2"/><circle cx="8" cy="9" r="2" fill="#cfe0f8"/></symbol>
<symbol id="he" viewBox="0 0 16 16"><circle cx="8" cy="8" r="7.500" fill="#2a66c0"/><circle cx="8" cy="8" r="5.500" fill="#fff"/><text class="tq" x="8" y="12">?</text></symbol>

<!-- status -->
<symbol id="t1" viewBox="0 0 16 16"><path d="M5 15V4h6V1" stroke="#ccc" fill="none"/><rect x="8" y="1" width="5" height="5" fill="none" stroke="#ccc"/></symbol>
<symbol id="t2" viewBox="0 0 16 16"><path d="M3 1v10h10" stroke="#4f9be8" fill="none"/><rect x="6" y="9" width="9" height="5" fill="#4f9be8"/></symbol>
<symbol id="t3" viewBox="0 0 16 16"><path d="M3 1v13h12" stroke="#4f9be8" fill="none" stroke-width="1.500"/><path d="M3 8h5v6" stroke="#4f9be8" fill="none"/></symbol>
<symbol id="t4" viewBox="0 0 16 16"><circle cx="7" cy="8" r="5.500" fill="none" stroke="#ccc" stroke-width="1.300"/><path d="M7 8h7" stroke="#ccc" stroke-width="1.300"/></symbol>
<symbol id="t5" viewBox="0 0 16 16"><path d="M2 1l12 14M8 2v13" stroke="#ccc" fill="none"/></symbol>
<symbol id="t6" viewBox="0 0 16 16"><path d="M2 14h13M2 14L11 3" stroke="#aaa" fill="none"/><path d="M7 11l2 3" stroke="#6db040"/></symbol>
<symbol id="t7" viewBox="0 0 16 16"><rect x="3" y="3" width="11" height="12" fill="none" stroke="#4f9be8" stroke-width="1.500"/><rect x="6" y="1" width="3" height="3" fill="#6db040"/></symbol>
<symbol id="t8" viewBox="0 0 16 16"><path d="M1 3h14M1 8h10M1 13h7" stroke="#ddd" stroke-width="2"/></symbol>
<symbol id="t9" viewBox="0 0 16 16"><rect x="1" y="1" width="14" height="14" fill="#3a70c0"/><path d="M1 5h14M1 9h14M1 13h14M5 1v14M9 1v14M13 1v14" stroke="#6ea2ea" stroke-dasharray="1 1"/></symbol>
<symbol id="ta" viewBox="0 0 16 16"><rect x="5" y="5" width="10" height="10" fill="#7ab07a"/><path d="M1 3h4M3 1v4" stroke="#4f9be8"/></symbol>
<symbol id="tb2" viewBox="0 0 16 16"><path d="M8 2L3 14M8 2l5 12M4 9h8" stroke="#ddd" stroke-width="2" fill="none"/></symbol>
<symbol id="tc" viewBox="0 0 16 16"><path d="M8 2L3 14M8 2l5 12M4 9h8" stroke="#ddd" stroke-width="2" fill="none"/><path d="M12 1l1 2" stroke="#ffd040" stroke-width="2"/></symbol>
<symbol id="td" viewBox="0 0 16 16"><circle cx="8" cy="8" r="4" fill="none" stroke="#ccc" stroke-width="2.500"/><path d="M8 1v3M8 12v3M1 8h3M12 8h3M3 3l2 2M11 11l2 2M13 3l-2 2M3 13l2-2" stroke="#ccc" stroke-width="1.800"/></symbol>
<symbol id="te" viewBox="0 0 16 16"><path d="M8 1v14M1 8h14" stroke="#ccc" stroke-width="1.600"/></symbol>
<symbol id="tf2" viewBox="0 0 16 16"><rect x="3" y="1" width="10" height="14" rx="1" fill="#2a60c0"/><path d="M5 4h6M5 7h6M5 10h6" stroke="#9ac0f0"/></symbol>
<symbol id="tg2" viewBox="0 0 16 16"><circle cx="8" cy="8" r="7" fill="#1a4a90" stroke="#5a9ae0" stroke-width="1.500"/><path d="M4 11l6-6" stroke="#9ac0f0"/></symbol>
<symbol id="th" viewBox="0 0 16 16"><rect x="2" y="3" width="8" height="9" fill="#eee"/><rect x="4" y="1" width="5" height="3" fill="#e8b030"/><path d="M7 12l3 3 5-6" stroke="#3aa83a" stroke-width="2" fill="none"/></symbol>
<symbol id="ti" viewBox="0 0 16 16"><rect x="2" y="1" width="5" height="5" fill="none" stroke="#ccc"/><rect x="9" y="10" width="5" height="5" fill="none" stroke="#ccc"/><path d="M4 6v6h5" stroke="#ccc" fill="none"/></symbol>
<symbol id="tj" viewBox="0 0 16 16"><rect x="1" y="2" width="14" height="12" fill="none" stroke="#ccc"/><path d="M4 11l3-3M4 8v3h3M12 5L9 8M12 8V5H9" stroke="#ccc" fill="none"/></symbol>
<symbol id="tk2" viewBox="0 0 16 16"><path d="M1 3h14M1 8h14M1 13h14" stroke="#ddd" stroke-width="2"/></symbol>
<symbol id="dc" viewBox="0 0 10 14"><path d="M2 1l3 3 3-3M2 5l3 3 3-3M2 10l3-3 3 3M2 13l3-3 3 3" fill="none" stroke="#ccc" stroke-width="1.300"/></symbol>
</svg>

<header class="titlebar">
  <div class="app"><svg class="applogo" viewBox="0 0 26 26"><path d="M15 1L1 20l3 5 7-4h6l1 4h7L17 1z" fill="url(#r)"/><path d="M13 8l-4 9h5z" fill="#6e0a0e"/></svg><span class="car appcar"></span></div>
  <div class="qa">
    <svg class="q"><use href="#fn"/></svg><svg class="q"><use href="#fo"/></svg><svg class="q"><use href="#fs"/></svg><svg class="q"><use href="#fa"/></svg><svg class="q"><use href="#fp2"/></svg><svg class="q"><use href="#fu"/></svg><span class="car car-dim"></span><svg class="q qr"><use href="#fd"/></svg><span class="car car-dim"></span>
    <div class="wscombo"><svg class="gear"><use href="#ge"/></svg><span class="wstext">3D-ALEJANDRO - Migra...</span><span class="car car-w"></span></div>
    <div class="blubtn"><svg class="q"><use href="#fb"/></svg></div>
    <span class="qamore"></span>
  </div>
  <div class="apptitle">Autodesk AutoCAD 2015 &nbsp;&nbsp;777777.dwg</div>
  <div class="tools">
    <span class="arr"></span>
    <div class="search">Escriba palabra clave o frase</div>
    <svg class="q tg1"><use href="#bi"/></svg><svg class="q"><use href="#us"/></svg><span class="login">Iniciar sesión</span><span class="car car-k"></span><svg class="q"><use href="#xx"/></svg><svg class="q"><use href="#tg"/></svg><span class="car car-k"></span><svg class="q tg2"><use href="#he"/></svg><span class="car car-k"></span>
  </div>
  <div class="win"><span class="wmin"></span><span class="wres"></span><span class="wclo">✕</span></div>
</header>

<nav class="menubar">
  <span>Archivo</span><span>Edición</span><span>Ver</span><span>Insertar</span><span>Formato</span><span>Herr.</span><span>Dibujo</span><span>Acotar</span><span>Modificar</span><span>Ventana</span><span>?</span><span>Express</span><span>Paramétrico</span>
  <span class="mdi"><i class="mmin"></i><i class="mres"></i><b class="mclo">✕</b></span>
</nav>

<nav class="tabs">
  <span class="first">Inicio</span><span>Sólido</span><span>Superficie</span><span>Malla</span><span>Visualizar</span><span>Paramétrico</span><span>Inserción</span><span>Anotar</span><span class="on">Presentación</span><span>Vista</span><span>Administrar</span><span>Salida</span><span>Complementos</span><span>Autodesk 360</span><span>Aplicaciones destacadas</span><span>Express Tools</span><span>BIM 360</span><span class="tabopt"><i class="pill"></i><i class="car car-w"></i></span>
</nav>

<section class="ribbon">
  <div class="panel p1">
    <div class="pb">
      <div class="btn w52 pad3"><svg class="big"><use href="#Nu"/></svg><span>Nueva</span><i class="car car-w"></i></div>
      <div class="btn w102"><svg class="big"><use href="#Pa"/></svg><span>Configuración de página</span></div>
    </div>
    <div class="pt">Presentación</div>
  </div>
  <div class="panel p2">
    <div class="pb pad35">
      <div class="btn w82"><svg class="big"><use href="#Rc"/></svg><span>Rectangular</span><i class="car car-w"></i></div>
      <div class="stack">
        <svg class="q"><use href="#d1"/></svg><svg class="q"><use href="#d5"/></svg>
        <div class="stk"><svg class="q"><use href="#n1"/></svg><i class="car car-w"></i></div>
      </div>
    </div>
    <div class="pt">Ventanas gráficas de presentación</div>
  </div>
  <div class="panel p3">
    <div class="pb">
      <div class="btn w46"><svg class="big"><use href="#Lb"/></svg><span>Base</span><i class="car car-w"></i></div>
      <div class="btn w60"><svg class="big"><use href="#Pr"/></svg><span>Proyectada</span></div>
      <div class="btn w68"><svg class="big"><use href="#Se"/></svg><span>Sección</span><i class="car car-w"></i></div>
      <div class="btn w54"><svg class="big"><use href="#De"/></svg><span>Detalle</span><i class="car car-w"></i></div>
    </div>
    <div class="pt">Crear vista</div>
  </div>
  <div class="panel p4">
    <div class="pb">
      <div class="btn w42"><svg class="big"><use href="#Ev"/></svg><span>Editar vista</span></div>
      <div class="btn w76"><svg class="big"><use href="#Ec"/></svg><span>Editar componentes</span></div>
      <i class="vsep"></i>
      <div class="btn w64"><svg class="big"><use href="#Bo"/></svg><span>Boceto de símbolo</span></div>
    </div>
    <div class="pt">Modificar vista</div>
  </div>
  <div class="panel p5">
    <div class="pb">
      <div class="btn w77 hot"><svg class="big"><use href="#Au"/></svg><span>Actualización automática</span></div>
      <div class="btn w74"><svg class="big"><use href="#Ua"/></svg><span>Actualizar vista</span><i class="car car-w sidecar"></i></div>
    </div>
    <div class="pt">Actualizar</div>
  </div>
  <div class="panel p6">
    <div class="pb stylesp">
      <div class="srow"><svg class="q"><use href="#Sa"/></svg><div class="scombo">Imperial24<i class="car car-w"></i></div></div>
      <div class="srow"><svg class="q"><use href="#Sb"/></svg><div class="scombo">Imperial24<i class="car car-w"></i></div></div>
    </div>
    <div class="pt ptl"><span>Estilos y normas</span><i class="launch">↘</i></div>
  </div>
  <div class="panel p7">
    <div class="pb">
      <div class="btn w46"><svg class="big"><use href="#Lb"/></svg><span>Base</span><i class="car car-w"></i></div>
      <div class="btn w60"><svg class="big"><use href="#Pr"/></svg><span>Proyectada</span></div>
      <div class="btn w68"><svg class="big"><use href="#Se"/></svg><span>Sección</span><i class="car car-w"></i></div>
      <div class="btn w54"><svg class="big"><use href="#De"/></svg><span>Detalle</span><i class="car car-w"></i></div>
    </div>
    <div class="pt">Crear vista</div>
  </div>
  <div class="slide"><span class="sl-t">Modific...</span><i class="sl-c"></i></div>
  <div class="slide"><svg class="big sl-i"><use href="#Au"/></svg><span class="sl-u">Actualizar</span><i class="sl-c"></i></div>
  <div class="slide"><span class="sl-t">Estilos...</span><i class="sl-c"></i></div>
</section>

<div class="doctabs">
  <div class="dt">Dibujo1</div><div class="dt">qwert*</div><div class="dt on"><em>777777*</em><b>✕</b></div><div class="dplus">+</div>
</div>

<div class="toprow">
  <div class="tg w367"><i class="grip"></i><svg class="c lead"><use href="#lm"/></svg>
    <div class="combo cb1"><svg class="c0"><use href="#bu"/></svg><svg class="c0"><use href="#sn"/></svg><svg class="c0"><use href="#vf"/></svg><svg class="c0"><use href="#lk"/></svg><i class="sw"></i><span class="ct1">AP-TEXTO</span><svg class="cv"><use href="#cv"/></svg></div>
    <svg class="c"><use href="#l2"/></svg><svg class="c"><use href="#l3"/></svg><svg class="c"><use href="#lm"/></svg>
  </div>
  <div class="tg g2"><i class="grip"></i>
    <div class="combo cb2"><i class="sw"></i><span>PorCapa</span><svg class="cv"><use href="#cv"/></svg></div>
    <div class="combo cb3"><i class="dash l1"></i><span>PorCapa</span><svg class="cv"><use href="#cv"/></svg></div>
    <div class="combo cb4"><i class="dash l2"></i><span>PorCapa</span><svg class="cv"><use href="#cv"/></svg></div>
    <div class="combo cb5 dim"><span>PorColor</span><svg class="cv"><use href="#cv"/></svg></div>
  </div>
  <div class="tg"><i class="grip"></i>
    <svg class="c lm1"><use href="#o1"/></svg><svg class="c"><use href="#o2"/></svg><svg class="c"><use href="#o3"/></svg><svg class="c"><use href="#o4"/></svg><svg class="c"><use href="#o5"/></svg><svg class="c"><use href="#o6"/></svg><svg class="c"><use href="#o7"/></svg><svg class="c"><use href="#o8"/></svg><svg class="c"><use href="#o9"/></svg><svg class="c"><use href="#oa"/></svg><svg class="c"><use href="#ob"/></svg><svg class="c"><use href="#pk"/></svg>
  </div>
  <div class="tg"><i class="grip"></i>
    <svg class="c lm1"><use href="#hd"/></svg><svg class="c"><use href="#mg"/></svg><svg class="c"><use href="#or"/></svg><svg class="c"><use href="#zw"/></svg><svg class="c"><use href="#fp"/></svg><i class="s st"></i>
    <div class="combo cb6 dim"><svg class="cv"><use href="#cv"/></svg></div>
  </div>
</div>

<main class="work">
  <div class="props"><i class="hgrip"></i><span class="propt">Propiedades</span></div>
  <div class="leftcol">
    <div class="vt vt1"><i class="hgrip"></i>
      <svg class="v"><use href="#ln"/></svg><svg class="v"><use href="#ry"/></svg><svg class="v"><use href="#pl"/></svg><svg class="v"><use href="#pg"/></svg><svg class="v"><use href="#rc"/></svg><svg class="v"><use href="#ar"/></svg><svg class="v"><use href="#ci"/></svg><svg class="v"><use href="#cl"/></svg><svg class="v"><use href="#sp"/></svg><svg class="v"><use href="#el"/></svg><svg class="v"><use href="#ea"/></svg><svg class="v"><use href="#ib"/></svg><svg class="v"><use href="#mb"/></svg><svg class="v"><use href="#pt"/></svg><svg class="v"><use href="#ha"/></svg><svg class="v"><use href="#gr"/></svg><svg class="v"><use href="#rg"/></svg><svg class="v"><use href="#tb"/></svg><svg class="v"><use href="#tx"/></svg><svg class="v"><use href="#ad"/></svg>
    </div>
    <div class="vt vt2"><i class="hgrip"></i>
      <svg class="v"><use href="#oc"/></svg><i class="hs"></i><svg class="v"><use href="#s1"/></svg><svg class="v"><use href="#s2"/></svg><svg class="v"><use href="#s3"/></svg><svg class="v"><use href="#s4"/></svg><i class="hs"></i><svg class="v"><use href="#sl"/></svg>
    </div>
  </div>
  <div class="center">
    <div class="canvasrow">
      <div class="canvas">
        <svg class="paper" viewBox="0 0 430 92">
          <rect x=".5" y=".5" width="429" height="100" fill="#fff" stroke="#222"/>
          <path d="M429 1v99" stroke="#444" stroke-width="2"/>
          <rect x="7" y="7" width="415" height="90" fill="none" stroke="#777" stroke-dasharray="3 2"/>
          <rect x="11" y="10" width="407" height="90" fill="#404040" stroke="#111"/>
          <path d="M12 11h28L12 29z" fill="#fff"/>
          <path d="M226 47l110 45H230z" fill="#fff"/>
          <path d="M236 60l70 32H224z" fill="#cfcfcf"/>
          <path d="M156 92V60c0-26 87-26 87 0v32z" fill="#151515"/>
          <ellipse cx="198" cy="58" rx="14" ry="5" fill="#242424"/>
          <path d="M263 69v23M263 69l-41 23" stroke="#1a2a80" stroke-width="1.500" fill="none"/>
          <path d="M151 85l13 7M152 88v4" stroke="#d01818" stroke-width="1.500" fill="none"/>
          <path d="M272 92l2-6h3" stroke="#5a9a30" fill="none"/>
          <path d="M278 92l8-6 18-7c10 0 16 4 22 13z" fill="#7f7f7f"/>
          <text class="ptitle" x="213" y="23">ESQUEMA DE CONEXIÓN</text>
          <text class="psub" x="213" y="31">(Medidas en metro)</text>
        </svg>
        <svg class="ucs" viewBox="0 0 52 88"><path d="M1 1v85h50zM1 76h10v10H1zM30 86l18-20M30 66l18 20M6 26l8 8 8-10M14 34v12" fill="none" stroke="#2a5fd0" stroke-width="1.300"/></svg>
        <div class="navbar"><svg class="navi" viewBox="0 0 31 130">
          <rect width="31" height="9" fill="#e6e6e6"/><circle cx="25" cy="4.500" r="3.500" fill="none" stroke="#d0d0d0"/>
          <circle cx="14" cy="28" r="11" fill="none" stroke="#dcdcdc" stroke-width="1.600"/><circle cx="14" cy="28" r="6" fill="none" stroke="#dcdcdc" stroke-width="1.600"/><path d="M20 24v8c0 3 3 3 5 1" fill="none" stroke="#dcdcdc" stroke-width="1.600"/>
          <text class="nav2" x="16" y="41">2D</text>
          <path d="M1 44h29" stroke="#dadada"/>
          <path d="M8 62l-5-6c-1-2 1-3 3-2l3 3V52c0-2 3-2 3 0v-2c0-2 3-2 3 0v1c0-2 3-2 3 0v2c0-2 3-2 3 0l1 8-2 7H11z" fill="none" stroke="#dadada" stroke-width="1.400"/>
          <path d="M5 76l20 20M25 76L5 96M5 76h5M5 76v5M25 76h-5M25 76v5M5 96h5M5 96v-5" fill="none" stroke="#dedede" stroke-width="1.300"/>
          <circle cx="19" cy="90" r="5.500" fill="#fafafa" stroke="#cfcfcf" stroke-width="1.500"/><path d="M23 94l5 5" stroke="#cfcfcf" stroke-width="2"/>
          <path d="M12 107h4" stroke="#d8d8d8"/>
          <circle cx="24" cy="122" r="4" fill="none" stroke="#d8d8d8"/><path d="M20 122h8" stroke="#d8d8d8"/>
        </svg></div>
        <i class="tick"></i>
        <div class="cmd">
          <div class="cmdhist">
            <pre class="cmdtxt">Layout: PR_A4-HORIZ (6) impreso.Restituyendo las ventanas en memoria caché -
Regenerando presentación.
Regenerando 16 entidades modificadas.
Comando "-PLOT" desconocido. Pulse F1 para obtener ayuda.
Comando "LPLOT" desconocido. Pulse F1 para obtener ayuda.
Comando "LPLOT" desconocido. Pulse F1 para obtener ayuda.
Comando "LPLOT" desconocido. Pulse F1 para obtener ayuda.
Comando "LPLOT" desconocido. Pulse F1 para obtener ayuda.
Comando "LPLOT" desconocido. Pulse F1 para obtener ayuda.
Comando "LPLOT" desconocido. Pulse F1 para obtener ayuda.
Comando "LPLOT" desconocido. Pulse F1 para obtener ayuda.
Layout: Presentación2 impreso.
Todos los layouts se imprimieron correctamente.
Comando: *Cancelar*
Comando: *Cancelar*
Comando:   &lt;Cambiando a: PR_A4-HORIZ (6)&gt;
Restituyendo las ventanas en memoria caché - Regenerando presentación.
Comando: *Cancelar*
Comando: *Cancelar*</pre>
            <div class="cscroll"><i class="chev up"></i><i class="cthumb"></i><i class="chev dn"></i></div>
          </div>
          <div class="cmdin"><span class="prompt">&gt;_</span><i class="car car-g"></i><i class="cursor"></i><span class="cmdup"><i class="car car-d"></i></span></div>
          <div class="handle"><i class="hgrip"></i><span class="hx">✕</span><svg class="hw" viewBox="0 0 16 16"><path d="M2 14l7-7a4 4 0 0 1 5-5l-3 3 1 2 2 1 2-3a4 4 0 0 1-6 5l-6 6z" fill="#eee"/></svg></div>
          <i class="red r1"></i><i class="red r2"></i>
        </div>
      </div>
      <div class="vscroll"><i class="chev up"></i><i class="vthumb"></i><i class="chev dn"></i></div>
    </div>
    <div class="brow b1">
      <div class="tg g326"><i class="grip"></i><svg class="c"><use href="#v1"/></svg><svg class="c"><use href="#v2"/></svg><svg class="c"><use href="#er"/></svg><i class="s"></i><svg class="c"><use href="#bx"/></svg><svg class="c"><use href="#pn"/></svg><svg class="c"><use href="#sg"/></svg><i class="s"></i><svg class="c"><use href="#wb"/></svg><svg class="c"><use href="#ht"/></svg><i class="s"></i><svg class="c"><use href="#lb"/></svg><svg class="c"><use href="#cm"/></svg><svg class="c"><use href="#ap"/></svg><svg class="c"><use href="#am"/></svg><svg class="c"><use href="#wr"/></svg></div>
      <div class="tg g272"><i class="grip"></i><svg class="c lm1"><use href="#cb"/></svg><i class="s"></i><svg class="c"><use href="#dw"/></svg><svg class="c"><use href="#at"/></svg><svg class="c"><use href="#ad2"/></svg><svg class="c"><use href="#ac"/></svg><i class="s"></i><svg class="c"><use href="#pc"/></svg><svg class="c"><use href="#p2"/></svg><svg class="c"><use href="#p3"/></svg><svg class="c"><use href="#pc"/></svg><svg class="c"><use href="#p4"/></svg><svg class="c"><use href="#p5"/></svg></div>
      <div class="tg g279"><i class="grip"></i><svg class="c lm1"><use href="#a1"/></svg><svg class="c"><use href="#a2"/></svg><svg class="c"><use href="#a3"/></svg><i class="s"></i><svg class="c"><use href="#a4"/></svg><svg class="c"><use href="#a5"/></svg><i class="s"></i>
        <div class="combo cbst"><span>Standard</span><svg class="cv"><use href="#cv"/></svg></div><svg class="c"><use href="#br"/></svg></div>
      <div class="tg g300"><i class="grip"></i><svg class="c lm1"><use href="#c1"/></svg><svg class="c"><use href="#c2"/></svg><svg class="c"><use href="#c3"/></svg><svg class="c"><use href="#c3"/></svg><svg class="c"><use href="#c3"/></svg><i class="s"></i><svg class="c"><use href="#c4"/></svg><svg class="c"><use href="#c5"/></svg><svg class="c"><use href="#c5"/></svg><svg class="c"><use href="#c6"/></svg><i class="s"></i><svg class="c"><use href="#c7"/></svg><svg class="c"><use href="#c3"/></svg><svg class="c"><use href="#fx"/></svg></div>
      <div class="tg g229"><i class="grip"></i><svg class="c"><use href="#d1"/></svg><svg class="c"><use href="#d2"/></svg><svg class="c"><use href="#d3"/></svg><svg class="c"><use href="#d4"/></svg><svg class="c"><use href="#d5"/></svg>
        <div class="combo cbaj"><span>Ajustar escala</span><svg class="cv"><use href="#cv"/></svg></div></div>
    </div>
    <div class="brow b2">
      <div class="tg g487"><i class="grip"></i><svg class="c"><use href="#u1"/></svg><svg class="c"><use href="#u2"/></svg><svg class="c"><use href="#u3"/></svg><i class="s"></i><svg class="c"><use href="#q1"/></svg><svg class="c"><use href="#q2"/></svg><svg class="c"><use href="#q3"/></svg><svg class="c"><use href="#q4"/></svg><svg class="c"><use href="#q5"/></svg><svg class="c"><use href="#q6"/></svg><svg class="c"><use href="#q7"/></svg><svg class="c"><use href="#q8"/></svg><i class="s"></i><svg class="c"><use href="#q9"/></svg><svg class="c"><use href="#qa"/></svg><svg class="c"><use href="#qb"/></svg><svg class="c"><use href="#q8"/></svg><i class="s"></i><svg class="c"><use href="#qc"/></svg><svg class="c"><use href="#qd"/></svg><svg class="c"><use href="#qe"/></svg><svg class="c"><use href="#qf"/></svg><svg class="c"><use href="#qg"/></svg></div>
      <div class="tg g532"><i class="grip"></i><svg class="c"><use href="#h1"/></svg><svg class="c"><use href="#h2"/></svg><svg class="c"><use href="#h3"/></svg><svg class="c"><use href="#h4"/></svg><svg class="c"><use href="#h5"/></svg><svg class="c"><use href="#h6"/></svg><svg class="c"><use href="#h7"/></svg><svg class="c"><use href="#h8"/></svg><svg class="c"><use href="#h9"/></svg><svg class="c"><use href="#ha2"/></svg><i class="s"></i><svg class="c"><use href="#j1"/></svg><svg class="c"><use href="#j2"/></svg><svg class="c"><use href="#j3"/></svg><svg class="c"><use href="#j4"/></svg><svg class="c"><use href="#j5"/></svg><i class="s"></i><svg class="c"><use href="#u1"/></svg><svg class="c"><use href="#u2"/></svg><svg class="c"><use href="#u3"/></svg><i class="s"></i><svg class="c"><use href="#m1"/></svg><svg class="c"><use href="#m2"/></svg><svg class="c"><use href="#m3"/></svg><svg class="c"><use href="#m4"/></svg></div>
      <div class="tg g239"><i class="grip"></i><svg class="c"><use href="#m5"/></svg><svg class="c"><use href="#m6"/></svg><i class="s"></i><svg class="c"><use href="#m7"/></svg><svg class="c"><use href="#m8"/></svg><svg class="c"><use href="#m9"/></svg><svg class="c"><use href="#ma"/></svg><svg class="c"><use href="#mb2"/></svg><i class="s"></i><svg class="c"><use href="#n1"/></svg><svg class="c"><use href="#n2"/></svg></div>
      <div class="tg g124"><i class="grip"></i><svg class="c"><use href="#k1"/></svg><svg class="c"><use href="#k2"/></svg><svg class="c"><use href="#k3"/></svg><svg class="c"><use href="#k4"/></svg><svg class="c"><use href="#k5"/></svg></div>
      <div class="tg g98"><i class="grip"></i><svg class="c"><use href="#e1"/></svg><svg class="c"><use href="#e2"/></svg><svg class="c"><use href="#e3"/></svg><svg class="c"><use href="#e4"/></svg></div>
    </div>
  </div>
  <div class="rightcol">
    <div class="vt vr1"><i class="hgrip"></i>
      <svg class="v"><use href="#mp"/></svg><svg class="v"><use href="#cp"/></svg><svg class="v"><use href="#mi"/></svg><svg class="v"><use href="#of"/></svg><svg class="v"><use href="#ay"/></svg><svg class="v"><use href="#mv"/></svg><svg class="v"><use href="#ro"/></svg><svg class="v"><use href="#sc"/></svg><svg class="v"><use href="#st"/></svg><svg class="v"><use href="#tr"/></svg><svg class="v"><use href="#xt"/></svg><svg class="v"><use href="#b1"/></svg><svg class="v"><use href="#b2"/></svg><svg class="v"><use href="#jn"/></svg><svg class="v"><use href="#ch"/></svg><svg class="v"><use href="#fi"/></svg><svg class="v"><use href="#bd"/></svg><svg class="v"><use href="#ex"/></svg>
    </div>
    <div class="vt vr2"><i class="hgrip"></i>
      <svg class="v"><use href="#lg"/></svg><svg class="v"><use href="#lf"/></svg><svg class="v"><use href="#ld"/></svg><i class="hs"></i><svg class="v"><use href="#lt"/></svg><i class="hs"></i><svg class="v"><use href="#gl"/></svg><svg class="v"><use href="#su"/></svg>
    </div>
    <div class="vt vr3"><i class="hgrip"></i><svg class="v"><use href="#or"/></svg><svg class="v"><use href="#tk"/></svg></div>
  </div>
</main>

<footer class="bottom">
  <div class="ltabs">
    <div class="lt w111">PR_A4-HORIZ (4)</div><div class="lt w111">PR_A4-HORIZ (2)</div><div class="lt on w115">PR_A4-HORIZ (6)</div><div class="lt w97">Presentación2</div><div class="lplus">+</div>
  </div>
  <svg class="dchev"><use href="#dc"/></svg>
  <div class="status">
    <span class="st-url">http://www.construcgeek.com/</span>
    <span class="st-xy">634.2586, -119.6702, 0.0000</span>
    <span class="st-pa">PAPEL</span>
    <div class="st-ic">
      <svg class="c"><use href="#t1"/></svg><svg class="c"><use href="#t2"/></svg><svg class="c"><use href="#t3"/></svg><svg class="c c1 m7"><use href="#t4"/></svg><i class="car car-w"></i><svg class="c c1"><use href="#t5"/></svg><i class="car car-w"></i><svg class="c"><use href="#t6"/></svg><svg class="c c1"><use href="#t7"/></svg><i class="car car-w"></i><svg class="c c1"><use href="#t8"/></svg><i class="car car-w"></i><svg class="c"><use href="#t9"/></svg><svg class="c"><use href="#ta"/></svg><svg class="c m14"><use href="#tb2"/></svg><svg class="c"><use href="#tc"/></svg><svg class="c c1 m8"><use href="#td"/></svg><i class="car car-w"></i><svg class="c"><use href="#te"/></svg><svg class="c m8"><use href="#tf2"/></svg><svg class="c"><use href="#tg2"/></svg><svg class="c"><use href="#th"/></svg><svg class="c"><use href="#ti"/></svg><svg class="c m16"><use href="#tj"/></svg><svg class="c"><use href="#tk2"/></svg>
    </div>
  </div>
</footer>
</body>
</html>
```

FILE: styles.css
```css
* { box-sizing: border-box; }
html, body { margin: 0; padding: 0; }
body { width: 1600px; height: 860px; overflow: hidden; background: #3b3b3b; font-family: "Noto Sans", "Open Sans", sans-serif; font-size: 12px; color: #ddd; display: flex; flex-direction: column; position: relative; }
i, em { font-style: normal; }
pre { margin: 0; }
.defs { position: absolute; width: 0; height: 0; }
svg { display: block; flex: none; overflow: visible; }

/* symbol helpers */
.k { fill: none; stroke: #ddd; stroke-width: 1.200; }
.kb { fill: none; stroke: #5c8fdc; }
.n { fill: #b6cff0; stroke: #3f74c4; stroke-width: .8; }
.ta { font: 8px "Liberation Sans", sans-serif; fill: #eee; }
.tA { font: bold 20px "Liberation Sans", sans-serif; fill: #f2f2f2; text-anchor: middle; }
.tf { font: italic 11px "Liberation Serif", serif; fill: #ccc; }
.tq { font: bold 11px "Liberation Sans", sans-serif; fill: #2a66c0; text-anchor: middle; }

/* carets */
.car { display: block; width: 0; height: 0; border-left: 3px solid transparent; border-right: 3px solid transparent; border-top: 3px solid #888; flex: none; }
.car-w { border-top-color: #e8e8e8; }
.car-k { border-top-color: #444; }
.car-dim { border-top-color: #555; }
.car-g { border-top-color: #999; }
.car-d { border-top: 0; border-bottom: 4px solid #222; }

/* title bar */
.titlebar { height: 24px; display: flex; flex: none; background: #e26a68; position: relative; }
.app { position: absolute; left: 0; top: 0; width: 41px; height: 40px; background: linear-gradient(#8f8f8f, #5d5d5d 55%, #474747); border: 1px solid #1f1f1f; z-index: 3; }
.applogo { position: absolute; left: 4px; top: 6px; width: 26px; height: 26px; }
.appcar { position: absolute; left: 31px; top: 19px; }
.qa { width: 458px; display: flex; align-items: center; padding-left: 51px; background: linear-gradient(#a7a7a7, #7a7a7a 45%, #646464); border-bottom: 1px solid #2c2c2c; }
.q { width: 16px; height: 16px; }
.qa > .q { margin-right: 7.500px; }
.qa > .car { margin: 0 8px 0 -1px; }
.qa > .qr { margin-right: 8px; }
.wscombo { width: 180px; height: 21px; display: flex; align-items: center; background: linear-gradient(#565656, #444); border: 1px solid #3a3a3a; color: #e4e4e4; padding: 0 8px 0 4px; font-size: 12px; margin-left: -3px; }
.gear { width: 14px; height: 14px; margin-right: 3px; }
.wstext { flex: 1; white-space: nowrap; }
.blubtn { width: 19px; height: 21px; margin-left: 4px; background: linear-gradient(#a9c7ec, #6f97c8); border: 1px solid #3c5e8c; display: flex; align-items: center; justify-content: center; }
.qamore { margin-left: 6px; width: 7px; height: 5px; border-top: 1px solid #eee; border-bottom: 4px solid #eee; }
.apptitle { width: 575px; text-align: center; font-size: 14.500px; color: #3a1f1f; line-height: 24px; white-space: pre; }
.tools { flex: none; width: 445px; display: flex; align-items: center; background: linear-gradient(#a4a4a4, #7a7a7a 45%, #6a6a6a); border-bottom: 1px solid #2c2c2c; color: #111; }
.arr { width: 16px; height: 23px; background: linear-gradient(#bdbdbd, #7c7c7c); position: relative; }
.arr::after { content: ""; position: absolute; left: 5px; top: 8px; border-left: 4px solid #eee; border-top: 3px solid transparent; border-bottom: 3px solid transparent; }
.search { width: 177px; height: 20px; border: 1px solid #3b3b3b; background: #696969; color: #c8c8c8; font-style: italic; font-size: 10.500px; line-height: 18px; padding-left: 2px; white-space: nowrap; overflow: hidden; }
.tg1 { margin-left: 6px; margin-right: 9px; }
.login { margin-left: 4px; width: 84px; font-size: 11.200px; color: #0e0e0e; }
.tools .car { margin: 0 7px 0 2px; }
.tools > .q { margin-right: 6px; }
.tools > .tg1 { margin-right: 8px; }
.tg2 { margin-left: 14px; }
.win { flex: 1; display: flex; position: relative; }
.wmin { position: absolute; left: 24px; top: 13px; width: 8px; height: 2px; background: #333; }
.wres { position: absolute; left: 56px; top: 6px; width: 9px; height: 9px; border: 1px solid #333; border-top-width: 2px; }
.wclo { position: absolute; left: 74px; top: 0; width: 37px; height: 20px; background: #c75450; color: #fff; text-align: center; line-height: 20px; font-size: 11px; }

/* menu */
.menubar { height: 21px; flex: none; display: flex; gap: 24px; align-items: center; padding-left: 55px; background: linear-gradient(#6f6f6f, #4d4d4d 60%, #444); border-bottom: 1px solid #2a2a2a; color: #dcdcdc; font-size: 11.300px; position: relative; }
.mdi { position: absolute; left: 1552px; top: 0; width: 48px; height: 20px; }
.mmin { position: absolute; left: 0; top: 13px; width: 10px; height: 2px; background: #eee; }
.mres { position: absolute; left: 17px; top: 5px; width: 10px; height: 10px; border: 1px solid #eee; }
.mclo { position: absolute; left: 34px; top: 1px; color: #eee; font-size: 11px; }

/* tabs */
.tabs { height: 20px; flex: none; display: flex; gap: 19.500px; align-items: center; padding-left: 12px; background: #444; border-bottom: 1px solid #2e5f82; color: #d4d4d4; font-size: 11.300px; position: relative; }
.tabs .first { margin-right: 4px; }
.tabs .on { background: #535353; height: 20px; line-height: 18px; padding: 0 9px; margin: 0 -10px; border: 1px solid #6a6a6a; border-bottom: 0; color: #eee; border-radius: 2px 2px 0 0; position: relative; top: 1px; }
.tabopt { display: flex; align-items: center; gap: 5px; margin-left: 13px; }
.pill { width: 13px; height: 8px; background: #e8e8e8; border-radius: 3px; }

/* ribbon */
.ribbon { height: 98px; flex: none; display: flex; padding-left: 3px; gap: 1px; background: linear-gradient(#474747, #3a3a3a 75%, #32658c); }
.panel { display: flex; flex-direction: column; background: #515151; height: 97px; border-bottom: 1px solid #47708e; }
.p1 { width: 157px; } .p2 { width: 189px; } .p3 { width: 232px; } .p4 { width: 191px; } .p5 { width: 156px; } .p6 { width: 152px; } .p7 { width: 230px; margin-right: 1px; }
.pb { height: 81px; display: flex; padding-top: 5px; }
.pad35 { padding-left: 35px; }
.pt { height: 15px; line-height: 14px; text-align: center; color: #dcdcdc; background: #434343; font-size: 11.200px; white-space: nowrap; }
.ptl { position: relative; }
.launch { position: absolute; right: 5px; top: 0; font-size: 10px; color: #ddd; }
.btn { display: flex; flex-direction: column; align-items: center; text-align: center; line-height: 15px; font-size: 11.300px; color: #dedede; flex: none; }
.btn .big { margin: 0 0 5px; }
.btn .car { margin-top: 5px; }
.big { width: 32px; height: 32px; }
.w42 { width: 42px; } .w46 { width: 46px; } .w52 { width: 52px; } .w54 { width: 54px; } .w60 { width: 60px; } .w64 { width: 64px; } .w68 { width: 68px; } .w74 { width: 74px; } .w76 { width: 76px; } .w77 { width: 77px; } .w82 { width: 82px; } .w102 { width: 102px; }
.pad3 { margin-left: 3px; }
.hot { margin-top: -1px; height: 75px; padding-top: 1px; background: linear-gradient(#86a9d9, #4d78ac 55%, #39598a); border: 1px solid #2a4a74; color: #f0f4fa; margin-left: 2px; }
.stack { display: flex; flex-direction: column; gap: 9px; padding: 2px 0 0 7px; }
.stk { display: flex; align-items: center; gap: 6px; }
.vsep { width: 1px; height: 72px; margin: 0 4px; background: #6b6b6b; }
.w74 { position: relative; }
.btn .sidecar { position: absolute; right: 0; top: 53px; margin: 0; }
.stylesp { flex-direction: column; gap: 4px; padding: 18px 0 0 4px; }
.srow { display: flex; align-items: center; gap: 8px; }
.srow .q { width: 17px; height: 17px; }
.scombo { width: 120px; height: 21px; background: linear-gradient(#5b5b5b, #4a4a4a); border: 1px solid #333; color: #e2e2e2; line-height: 19px; padding-left: 3px; position: relative; font-size: 11px; }
.scombo .car { position: absolute; right: 3px; top: 8px; border-left-width: 4px; border-right-width: 4px; border-top-width: 4px; }
.slide { width: 60px; height: 97px; margin-top: 1px; background: linear-gradient(#5a5a5a, #4c4c4c 55%, #424242); border: 1px solid #2f4a5e; position: relative; color: #dedede; font-size: 11.300px; text-align: center; }
.sl-t { display: block; margin-top: 7px; white-space: nowrap; }
.sl-i { margin: 0 auto; }
.sl-u { display: block; margin-top: 7px; }
.sl-c { position: absolute; left: 26px; bottom: 7px; border-left: 4px solid transparent; border-right: 4px solid transparent; border-top: 4px solid #eee; }

/* doc tabs */
.doctabs { height: 31px; flex: none; display: flex; gap: 3px; padding: 5px 0 0 22px; background: #3a3a3a; }
.dt { width: 121px; height: 22px; padding-left: 10px; line-height: 21px; background: linear-gradient(#505050, #454545); color: #a2a2a2; font-size: 11.500px; border-radius: 10px 10px 0 0; position: relative; }
.dt.on { background: linear-gradient(#6d6d6d, #515151); color: #e8e8e8; }
.dt.on em { font-style: italic; }
.dt.on b { position: absolute; right: 13px; top: 0; font-size: 9px; color: #888; font-weight: 400; }
.dplus { width: 20px; height: 15px; margin: 4px 0 0 4px; background: #4b4b4b; border-radius: 8px 8px 0 0; text-align: center; line-height: 15px; color: #ccc; font-weight: 700; }

/* toolbars */
.toprow { height: 28px; flex: none; display: flex; gap: 3px; padding: 0 0 0 2px; background: #545454; align-items: flex-start; }
.tg { height: 23px; display: flex; align-items: center; background: #4b4b4b; border: 1px solid #2f2f2f; flex: none; }
.g2 { margin-right: -1px; padding-right: 1px; }
.grip { width: 4px; height: 17px; margin: 0 2px; flex: none; background: conic-gradient(#9a9a9a 25%, transparent 25%) 0 0 / 2px 2px; }
.c { width: 16px; height: 16px; margin: 0 3.500px; }
.c.lead { margin: 0 0 0 2px; }
.c.lm1 { margin-left: 1px; }
.s { width: 1px; height: 17px; background: #777; flex: none; margin: 0 2.500px; }
.s.st { margin: 0 1px; }
.combo { height: 21px; display: flex; align-items: center; background: linear-gradient(#f0f0f0, #dfdfdf); border: 1px solid #aaa; color: #111; flex: none; font-size: 10.500px; position: relative; }
.combo.dim { background: #ececec; color: #888; }
.cv { width: 10px; height: 10px; position: absolute; right: 4px; top: 5px; }
.cb1 { width: 300px; padding-left: 1px; margin: 0 1px 0 3px; }
.cb1 .c0 { width: 15px; height: 15px; margin-right: 2px; }
.sw { width: 10px; height: 10px; background: #000; flex: none; }
.cb1 .sw { margin-left: 0; }
.ct1 { margin-left: 5px; font-size: 12px; }
.cb2 { width: 149px; padding-left: 5px; gap: 4px; }
.cb3 { width: 159px; margin-left: 7px; padding-left: 4px; }
.cb4 { width: 125px; margin-left: 7px; padding-left: 4px; }
.cb5 { width: 120px; margin-left: 5px; padding-left: 10px; font-size: 10.300px; }
.dash { height: 1px; background: #111; margin-right: 5px; flex: none; }
.l1 { width: 60px; } .l2 { width: 36px; }
.cb6 { width: 138px; margin-left: 2px; }
.w367 { width: 397px; }

/* work */
.work { height: 610px; flex: none; display: flex; background: #4f4f4f; position: relative; }
.props { width: 22px; margin: 0 3px 0 2px; height: 604px; background: linear-gradient(90deg, #6c6c6c, #8a8a8a 50%, #5e5e5e); border: 1px solid #3f3f3f; position: relative; display: flex; flex-direction: column; align-items: center; }
.hgrip { display: block; width: 12px; height: 6px; margin-top: 3px; flex: none; background: conic-gradient(#aaa 25%, transparent 25%) 0 0 / 2px 2px; }
.propt { position: absolute; left: 0; right: 0; bottom: 256px; writing-mode: vertical-rl; transform: rotate(180deg); font-size: 14.500px; color: #e4e4e4; line-height: 20px; }
.leftcol { width: 26px; display: flex; flex-direction: column; gap: 3px; height: 604px; }
.vt { background: #4e4e4e; border: 1px solid #2f2f2f; display: flex; flex-direction: column; align-items: center; }
.vt1 { height: 446px; }
.vt2 { height: 155px; }
.v { width: 17px; height: 17px; margin: 0 0 5px; }
.vt > .hgrip { margin: 3px 0 2px; height: 5px; }
.hs { width: 20px; height: 1px; background: #ccc; flex: none; margin: 1px 0 5px; }
.center { width: 1517px; margin-left: 3px; display: flex; flex-direction: column; }
.canvasrow { height: 551px; display: flex; }
.canvas { width: 1496px; height: 551px; background: #fff; position: relative; overflow: visible; }
.vscroll { width: 15px; background: #f0f0f0; position: relative; }
.chev { position: absolute; left: 50%; width: 7px; height: 7px; margin-left: -3.500px; border-left: 1.500px solid #333; border-top: 1.500px solid #333; }
.chev.up { top: 6px; transform: rotate(45deg); }
.chev.dn { bottom: 6px; transform: rotate(225deg); }
.vthumb { position: absolute; left: 0; right: 0; top: 263px; height: 17px; background: #cdcdcd; }

.paper { position: absolute; left: 497px; top: 126px; width: 430px; height: 92px; overflow: hidden; }
.ptitle { font: bold 10px "Liberation Sans", sans-serif; fill: #111; text-anchor: middle; }
.psub { font: bold 4.500px "Liberation Sans", sans-serif; fill: #222; text-anchor: middle; }
.ucs { position: absolute; left: 11px; top: 453px; width: 52px; height: 88px; }
.navbar { position: absolute; left: 1457px; top: 2px; width: 35px; height: 134px; border: 2px solid #d4d4d4; border-radius: 5px; background: #fafafa; overflow: hidden; }
.navi { width: 31px; height: 130px; }
.nav2 { font: bold 10px "Liberation Sans", sans-serif; fill: #cfdbe8; }
.tick { position: absolute; left: 1048px; top: 321px; width: 5px; height: 1px; background: #111; }

.cmd { position: absolute; left: 461px; top: 217px; width: 586px; height: 322px; border: 1px solid #111; border-bottom: 0; background: #c8c8c8; }
.cmdhist { height: 298px; position: relative; border-bottom: 1px solid #222; }
.cmdtxt { padding: 12px 0 0 1px; font: 11.630px/15px "DejaVu Sans Mono", "Liberation Mono", monospace; color: #141414; overflow: hidden; height: 297px; }
.cscroll { position: absolute; right: 0; top: 0; bottom: 0; width: 17px; background: #c2c2c2; }
.cthumb { position: absolute; left: 0; right: 0; top: 15px; height: 233px; background: #d0d0d0; }
.cmdin { height: 23px; background: #fff; border-bottom: 1px solid #8a8a8a; position: relative; display: flex; align-items: center; padding-left: 6px; gap: 4px; }
.prompt { width: 13px; height: 13px; background: #ddd; border: 1px solid #999; font: 8px/11px "Liberation Mono", monospace; color: #334; text-align: center; }
.cursor { width: 1px; height: 16px; background: #000; margin-left: 1px; }
.cmdup { position: absolute; right: 0; top: 0; width: 15px; height: 22px; background: #a9cdee; border: 1px solid #3a78b8; display: flex; align-items: center; justify-content: center; }
.handle { position: absolute; left: -24px; top: 254px; width: 23px; height: 68px; background: linear-gradient(#6a6a6a, #4a4a4a 60%, #2e2e2e); border-radius: 2px 0 0 2px; display: flex; flex-direction: column; align-items: center; color: #eee; }
.hx { font: bold 14px/16px "Liberation Sans", sans-serif; margin-top: 3px; }
.hw { width: 15px; height: 15px; margin-top: 4px; }
.red { position: absolute; border: 3.500px solid #d9232e; }
.r1 { left: -15px; top: 56px; width: 443px; height: 124px; }
.r2 { left: -14px; top: 191px; width: 353px; height: 19px; }

.brow { display: flex; gap: 2px; margin-top: 4px; height: 24px; }
.b2 { margin-top: 2px; }
.brow .tg { height: 24px; }
.g326 { width: 327px; } .g272 { width: 273px; } .g279 { width: 277px; } .g300 { width: 300px; } .g229 { width: 231px; }
.g487 { width: 487px; } .g532 { width: 532px; } .g239 { width: 239px; } .g124 { width: 124px; } .g98 { width: 98px; }
.cbst { width: 118px; padding-left: 18px; margin-left: -1px; font-size: 11px; }
.cbaj { width: 98px; padding-left: 2px; margin-left: 7px; background: #fff; }
.rightcol { width: 26px; margin-left: 4px; display: flex; flex-direction: column; gap: 2px; }
.vr1 { height: 402px; }
.vr2 { height: 154px; }
.vr3 { height: 58px; }

/* bottom */
.bottom { height: 28px; flex: none; display: flex; background: #3b3b3b; }
.ltabs { width: 590px; display: flex; padding-left: 13px; gap: 2px; height: 18px; }
.lt { height: 17px; text-align: center; line-height: 15px; background: linear-gradient(#5d5d5d, #505050); color: #a6a6a6; font-size: 11.500px; border-radius: 0 0 8px 8px; }
.lt.on { background: linear-gradient(#5a5a5a, #909090); color: #f6f6f6; font-weight: 700; }
.w111 { width: 111px; } .w115 { width: 115px; } .w97 { width: 97px; }
.lplus { width: 22px; height: 14px; margin-left: 2px; background: #4d4d4d; border-radius: 0 0 8px 8px; text-align: center; line-height: 13px; font-weight: 700; color: #ccc; }
.dchev { width: 10px; height: 14px; margin: 1px 6px 0 6px; }
.status { width: 988px; height: 25px; display: flex; align-items: center; background: #555; border: 1px solid #3f3f3f; color: #dedede; font-size: 11.300px; }
.st-url { width: 180px; padding-left: 7px; white-space: nowrap; border-right: 1px solid #333; line-height: 23px; }
.st-xy { width: 182px; padding-left: 15px; white-space: nowrap; border-right: 1px solid #333; line-height: 23px; font-size: 11.600px; }
.st-pa { width: 42px; text-align: center; border-right: 1px solid #333; line-height: 23px; }
.st-ic { display: flex; align-items: center; padding-left: 1px; }
.st-ic .c.c1 { margin-right: 0; }
.st-ic .car { margin: 0 5px 0 9px; }
.st-ic .m7 { margin-left: 6.500px; }
.st-ic .m14 { margin-left: 13.500px; }
.st-ic .m8 { margin-left: 8px; }
.st-ic .m16 { margin-left: 16.500px; }
```
